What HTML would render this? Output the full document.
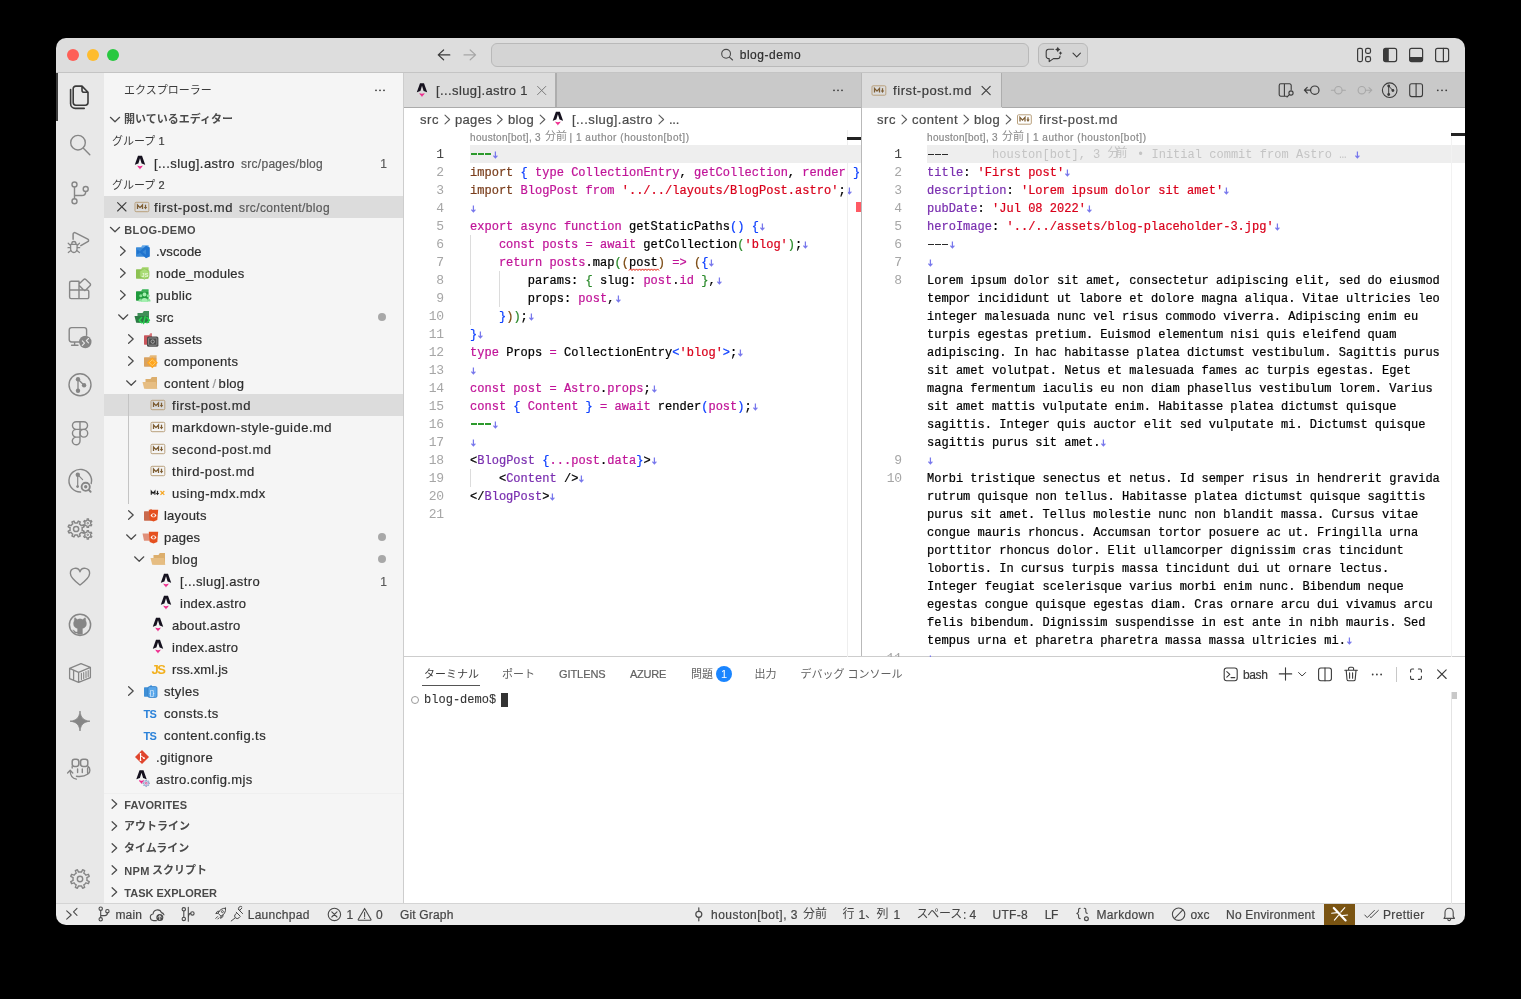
<!DOCTYPE html>
<html><head><meta charset="utf-8"><title>blog-demo</title>
<style>
html,body{margin:0;padding:0}
body{background:#000;width:1521px;height:999px;overflow:hidden;position:relative;font-family:"Liberation Sans",sans-serif;-webkit-font-smoothing:antialiased}
#win{will-change:transform;position:absolute;left:0;top:0;width:1521px;height:999px;clip-path:inset(38px 56px 74px 56px round 10px);background:#fff}
.m{font-family:"Liberation Mono",monospace}
svg{overflow:visible}
.jpt{position:absolute;white-space:pre;font-family:"Liberation Sans","Noto Sans CJK JP",sans-serif}
.code{position:absolute;font-family:"Liberation Mono",monospace;font-size:12px;line-height:18px;letter-spacing:0.022px;white-space:pre;color:#000}
.code i{font-style:normal}
.code{-webkit-text-stroke:0.22px}
svg.a{vertical-align:top;display:inline-block}
.ln{position:absolute;font-family:"Liberation Mono",monospace;font-size:13px;letter-spacing:-0.4px;line-height:18px;text-align:right;color:#a3a3a3;white-space:pre}
.e{color:#5f7cff;font-size:9px;position:relative;top:0px}
</style></head><body><div id="win">
<div style="position:absolute;left:56px;top:38px;width:1409px;height:35px;background:#dddddd;"></div>
<div style="position:absolute;left:56px;top:72px;width:1409px;height:1px;background:#c4c4c4;"></div>
<div style="position:absolute;left:56px;top:73px;width:48px;height:831px;background:#e8e8e8;"></div>
<div style="position:absolute;left:104px;top:73px;width:299px;height:831px;background:#f5f5f5;"></div>
<div style="position:absolute;left:403px;top:73px;width:1px;height:831px;background:#cdcdcd;"></div>
<div style="position:absolute;left:404px;top:73px;width:1061px;height:35px;background:#c9c9c9;"></div>
<div style="position:absolute;left:404px;top:107px;width:1061px;height:1px;background:#ababab;"></div>
<div style="position:absolute;left:404px;top:108px;width:1061px;height:549px;background:#fff;"></div>
<div style="position:absolute;left:861px;top:73px;width:1px;height:584px;background:#b9b9b9;"></div>
<div style="position:absolute;left:404px;top:656px;width:1061px;height:1px;background:#cdcdcd;"></div>
<div style="position:absolute;left:404px;top:657px;width:1061px;height:246px;background:#fff;"></div>
<div style="position:absolute;left:56px;top:903px;width:1409px;height:22px;background:#ececec;"></div>
<div style="position:absolute;left:56px;top:903px;width:1409px;height:1px;background:#d4d4d4;"></div>
<div style="position:absolute;left:67px;top:49px;width:12px;height:12px;border-radius:50%;background:#fe5f57"></div>
<div style="position:absolute;left:87px;top:49px;width:12px;height:12px;border-radius:50%;background:#febc2e"></div>
<div style="position:absolute;left:107px;top:49px;width:12px;height:12px;border-radius:50%;background:#28c840"></div>
<div style="position:absolute;left:491px;top:43px;width:536px;height:21.7px;border:1px solid #b9b9b9;border-radius:6px;background:#d4d4d4;box-sizing:content-box"></div>
<div style="position:absolute;top:44.4px;height:22px;line-height:22px;font-size:12px;color:#2e2e2e;white-space:pre;left:739.7px;letter-spacing:0.533px;-webkit-text-stroke:0.2px;">blog-demo</div>
<div style="position:absolute;left:1038px;top:43px;width:48px;height:21.7px;border:1px solid #b9b9b9;border-radius:6px;background:#d4d4d4"></div>
<div class="jpt" style="left:124px;top:84.5px;font-size:11px;line-height:11px;height:11px;color:#3b3b3b">エクスプローラー</div>
<div class="jpt" style="left:124px;top:113.5px;font-size:11px;line-height:11px;height:11px;color:#4a4a4a;font-weight:bold">開いているエディター</div>
<div class="jpt" style="left:112px;top:135.5px;font-size:11px;line-height:11px;height:11px;color:#3b3b3b">グループ</div>
<div style="position:absolute;top:130px;height:22px;line-height:22px;font-size:11px;color:#3b3b3b;white-space:pre;left:158.5px;-webkit-text-stroke:0.2px;">1</div>
<div class="jpt" style="left:112px;top:179.5px;font-size:11px;line-height:11px;height:11px;color:#3b3b3b">グループ</div>
<div style="position:absolute;top:174px;height:22px;line-height:22px;font-size:11px;color:#3b3b3b;white-space:pre;left:158.5px;-webkit-text-stroke:0.2px;">2</div>
<div style="position:absolute;left:104px;top:196px;width:299px;height:22px;background:#dcdcdc;"></div>
<div style="position:absolute;top:153px;height:22px;line-height:22px;font-size:13px;color:#2e2e2e;white-space:pre;left:154px;letter-spacing:0.439px;-webkit-text-stroke:0.2px;">[...slug].astro</div>
<div style="position:absolute;top:153px;height:22px;line-height:22px;font-size:12px;color:#5a5a5a;white-space:pre;left:241px;letter-spacing:0.282px;-webkit-text-stroke:0.2px;">src/pages/blog</div>
<div style="position:absolute;top:153px;height:22px;line-height:22px;font-size:12px;color:#5a5a5a;white-space:pre;right:1134px;-webkit-text-stroke:0.2px;">1</div>
<div style="position:absolute;top:197px;height:22px;line-height:22px;font-size:13px;color:#2e2e2e;white-space:pre;left:154px;letter-spacing:0.576px;-webkit-text-stroke:0.2px;">first-post.md</div>
<div style="position:absolute;top:197px;height:22px;line-height:22px;font-size:12px;color:#5a5a5a;white-space:pre;left:239px;letter-spacing:0.393px;-webkit-text-stroke:0.2px;">src/content/blog</div>
<div style="position:absolute;top:218.5px;height:22px;line-height:22px;font-size:11px;color:#4a4a4a;white-space:pre;left:124.3px;font-weight:bold;letter-spacing:0.340px;">BLOG-DEMO</div>
<div style="position:absolute;left:104px;top:394px;width:299px;height:22px;background:#dcdcdc;"></div>
<div style="position:absolute;top:241px;height:22px;line-height:22px;font-size:13px;color:#2e2e2e;white-space:pre;left:156px;letter-spacing:0.114px;-webkit-text-stroke:0.2px;">.vscode</div>
<div style="position:absolute;top:263px;height:22px;line-height:22px;font-size:13px;color:#2e2e2e;white-space:pre;left:156px;letter-spacing:0.276px;-webkit-text-stroke:0.2px;">node_modules</div>
<div style="position:absolute;top:285px;height:22px;line-height:22px;font-size:13px;color:#2e2e2e;white-space:pre;left:156px;letter-spacing:0.356px;-webkit-text-stroke:0.2px;">public</div>
<div style="position:absolute;top:307px;height:22px;line-height:22px;font-size:13px;color:#2e2e2e;white-space:pre;left:156px;letter-spacing:0.124px;-webkit-text-stroke:0.2px;">src</div>
<div style="position:absolute;top:329px;height:22px;line-height:22px;font-size:13px;color:#2e2e2e;white-space:pre;left:164px;letter-spacing:0.105px;-webkit-text-stroke:0.2px;">assets</div>
<div style="position:absolute;top:351px;height:22px;line-height:22px;font-size:13px;color:#2e2e2e;white-space:pre;left:164px;letter-spacing:0.358px;-webkit-text-stroke:0.2px;">components</div>
<div style="position:absolute;top:395px;height:22px;line-height:22px;font-size:13px;color:#2e2e2e;white-space:pre;left:172px;letter-spacing:0.576px;-webkit-text-stroke:0.2px;">first-post.md</div>
<div style="position:absolute;top:417px;height:22px;line-height:22px;font-size:13px;color:#2e2e2e;white-space:pre;left:172px;letter-spacing:0.486px;-webkit-text-stroke:0.2px;">markdown-style-guide.md</div>
<div style="position:absolute;top:439px;height:22px;line-height:22px;font-size:13px;color:#2e2e2e;white-space:pre;left:172px;letter-spacing:0.501px;-webkit-text-stroke:0.2px;">second-post.md</div>
<div style="position:absolute;top:461px;height:22px;line-height:22px;font-size:13px;color:#2e2e2e;white-space:pre;left:172px;letter-spacing:0.541px;-webkit-text-stroke:0.2px;">third-post.md</div>
<div style="position:absolute;top:483px;height:22px;line-height:22px;font-size:13px;color:#2e2e2e;white-space:pre;left:172px;letter-spacing:0.428px;-webkit-text-stroke:0.2px;">using-mdx.mdx</div>
<div style="position:absolute;top:505px;height:22px;line-height:22px;font-size:13px;color:#2e2e2e;white-space:pre;left:164px;letter-spacing:0.201px;-webkit-text-stroke:0.2px;">layouts</div>
<div style="position:absolute;top:527px;height:22px;line-height:22px;font-size:13px;color:#2e2e2e;white-space:pre;left:164px;letter-spacing:0.156px;-webkit-text-stroke:0.2px;">pages</div>
<div style="position:absolute;top:549px;height:22px;line-height:22px;font-size:13px;color:#2e2e2e;white-space:pre;left:172px;letter-spacing:0.355px;-webkit-text-stroke:0.2px;">blog</div>
<div style="position:absolute;top:571px;height:22px;line-height:22px;font-size:13px;color:#2e2e2e;white-space:pre;left:180px;letter-spacing:0.372px;-webkit-text-stroke:0.2px;">[...slug].astro</div>
<div style="position:absolute;top:593px;height:22px;line-height:22px;font-size:13px;color:#2e2e2e;white-space:pre;left:180px;letter-spacing:0.237px;-webkit-text-stroke:0.2px;">index.astro</div>
<div style="position:absolute;top:615px;height:22px;line-height:22px;font-size:13px;color:#2e2e2e;white-space:pre;left:172px;letter-spacing:0.323px;-webkit-text-stroke:0.2px;">about.astro</div>
<div style="position:absolute;top:637px;height:22px;line-height:22px;font-size:13px;color:#2e2e2e;white-space:pre;left:172px;letter-spacing:0.237px;-webkit-text-stroke:0.2px;">index.astro</div>
<div style="position:absolute;top:659px;height:22px;line-height:22px;font-size:13px;color:#2e2e2e;white-space:pre;left:172px;letter-spacing:0.174px;-webkit-text-stroke:0.2px;">rss.xml.js</div>
<div style="position:absolute;top:681px;height:22px;line-height:22px;font-size:13px;color:#2e2e2e;white-space:pre;left:164px;letter-spacing:0.345px;-webkit-text-stroke:0.2px;">styles</div>
<div style="position:absolute;top:703px;height:22px;line-height:22px;font-size:13px;color:#2e2e2e;white-space:pre;left:164px;letter-spacing:0.356px;-webkit-text-stroke:0.2px;">consts.ts</div>
<div style="position:absolute;top:725px;height:22px;line-height:22px;font-size:13px;color:#2e2e2e;white-space:pre;left:164px;letter-spacing:0.437px;-webkit-text-stroke:0.2px;">content.config.ts</div>
<div style="position:absolute;top:747px;height:22px;line-height:22px;font-size:13px;color:#2e2e2e;white-space:pre;left:156px;letter-spacing:0.352px;-webkit-text-stroke:0.2px;">.gitignore</div>
<div style="position:absolute;top:769px;height:22px;line-height:22px;font-size:13px;color:#2e2e2e;white-space:pre;left:156px;letter-spacing:0.342px;-webkit-text-stroke:0.2px;">astro.config.mjs</div>
<div style="position:absolute;top:373px;height:22px;line-height:22px;font-size:13px;color:#2e2e2e;white-space:pre;left:164px;letter-spacing:0.422px;-webkit-text-stroke:0.2px;">content</div>
<div style="position:absolute;top:373px;height:22px;line-height:22px;font-size:13px;color:#9a9a9a;white-space:pre;left:212.5px;-webkit-text-stroke:0.2px;">/</div>
<div style="position:absolute;top:373px;height:22px;line-height:22px;font-size:13px;color:#2e2e2e;white-space:pre;left:218.6px;letter-spacing:0.305px;-webkit-text-stroke:0.2px;">blog</div>
<div style="position:absolute;top:571px;height:22px;line-height:22px;font-size:12px;color:#5a5a5a;white-space:pre;right:1134px;-webkit-text-stroke:0.2px;">1</div>
<div style="position:absolute;left:378px;top:313px;width:8px;height:8px;border-radius:50%;background:#a8a8a8"></div>
<div style="position:absolute;left:378px;top:533px;width:8px;height:8px;border-radius:50%;background:#a8a8a8"></div>
<div style="position:absolute;left:378px;top:555px;width:8px;height:8px;border-radius:50%;background:#a8a8a8"></div>
<div style="position:absolute;left:128px;top:394px;width:1px;height:110px;background:#c4c4c4;"></div>
<div style="position:absolute;left:104px;top:793px;width:299px;height:1px;background:#efefef;"></div>
<div style="position:absolute;top:793.5px;height:22px;line-height:22px;font-size:11px;color:#4a4a4a;white-space:pre;left:124.3px;font-weight:bold;letter-spacing:0.172px;">FAVORITES</div>
<div class="jpt" style="left:124px;top:820.5px;font-size:11px;line-height:11px;height:11px;color:#4a4a4a;font-weight:bold">アウトライン</div>
<div class="jpt" style="left:124px;top:842.5px;font-size:11px;line-height:11px;height:11px;color:#4a4a4a;font-weight:bold">タイムライン</div>
<div style="position:absolute;top:859.5px;height:22px;line-height:22px;font-size:11px;color:#4a4a4a;white-space:pre;left:124.3px;font-weight:bold;letter-spacing:0.352px;">NPM</div>
<div class="jpt" style="left:152px;top:864.5px;font-size:11px;line-height:11px;height:11px;color:#4a4a4a;font-weight:bold">スクリプト</div>
<div style="position:absolute;top:881.5px;height:22px;line-height:22px;font-size:11px;color:#4a4a4a;white-space:pre;left:124.3px;font-weight:bold;letter-spacing:-0.001px;">TASK EXPLORER</div>
<div style="position:absolute;left:404px;top:73px;width:152px;height:34px;background:#dcdcdc;"></div>
<div style="position:absolute;left:555.3px;top:73px;width:1.6px;height:34px;background:#adadad;"></div>
<div style="position:absolute;top:80px;height:22px;line-height:22px;font-size:13px;color:#3b3b3b;white-space:pre;left:436px;letter-spacing:0.396px;-webkit-text-stroke:0.2px;">[...slug].astro 1</div>
<div style="position:absolute;left:862px;top:73px;width:140px;height:35px;background:#dcdcdc;"></div>
<div style="position:absolute;left:1000.7px;top:73px;width:1.5px;height:34px;background:#adadad;"></div>
<div style="position:absolute;top:80px;height:22px;line-height:22px;font-size:13px;color:#3b3b3b;white-space:pre;left:893px;letter-spacing:0.576px;-webkit-text-stroke:0.2px;">first-post.md</div>
<div style="position:absolute;top:109px;height:22px;line-height:22px;font-size:13px;color:#4a4a4a;white-space:pre;left:420px;letter-spacing:0.557px;-webkit-text-stroke:0.2px;">src</div>
<div style="position:absolute;top:109px;height:22px;line-height:22px;font-size:13px;color:#4a4a4a;white-space:pre;left:455px;letter-spacing:0.316px;-webkit-text-stroke:0.2px;">pages</div>
<div style="position:absolute;top:109px;height:22px;line-height:22px;font-size:13px;color:#4a4a4a;white-space:pre;left:508px;letter-spacing:0.355px;-webkit-text-stroke:0.2px;">blog</div>
<div style="position:absolute;top:109px;height:22px;line-height:22px;font-size:13px;color:#4a4a4a;white-space:pre;left:572px;letter-spacing:0.439px;-webkit-text-stroke:0.2px;">[...slug].astro</div>
<div style="position:absolute;top:109px;height:22px;line-height:22px;font-size:13px;color:#4a4a4a;white-space:pre;left:669px;letter-spacing:-0.278px;-webkit-text-stroke:0.2px;">...</div>
<div style="position:absolute;top:109px;height:22px;line-height:22px;font-size:13px;color:#4a4a4a;white-space:pre;left:877px;letter-spacing:0.557px;-webkit-text-stroke:0.2px;">src</div>
<div style="position:absolute;top:109px;height:22px;line-height:22px;font-size:13px;color:#4a4a4a;white-space:pre;left:912px;letter-spacing:0.479px;-webkit-text-stroke:0.2px;">content</div>
<div style="position:absolute;top:109px;height:22px;line-height:22px;font-size:13px;color:#4a4a4a;white-space:pre;left:974px;letter-spacing:0.355px;-webkit-text-stroke:0.2px;">blog</div>
<div style="position:absolute;top:109px;height:22px;line-height:22px;font-size:13px;color:#4a4a4a;white-space:pre;left:1039px;letter-spacing:0.576px;-webkit-text-stroke:0.2px;">first-post.md</div>
<div style="position:absolute;top:126.5px;height:22px;line-height:22px;font-size:10px;color:#8a8a8a;white-space:pre;left:470px;letter-spacing:0.323px;-webkit-text-stroke:0.2px;">houston[bot], 3</div>
<div class="jpt" style="left:545px;top:130.8px;font-size:11px;line-height:11px;height:11px;color:#8a8a8a">分前</div>
<div style="position:absolute;top:126.5px;height:22px;line-height:22px;font-size:10px;color:#8a8a8a;white-space:pre;left:569.5px;letter-spacing:0.538px;-webkit-text-stroke:0.2px;">| 1 author (houston[bot])</div>
<div style="position:absolute;top:126.5px;height:22px;line-height:22px;font-size:10px;color:#8a8a8a;white-space:pre;left:927px;letter-spacing:0.323px;-webkit-text-stroke:0.2px;">houston[bot], 3</div>
<div class="jpt" style="left:1002px;top:130.8px;font-size:11px;line-height:11px;height:11px;color:#8a8a8a">分前</div>
<div style="position:absolute;top:126.5px;height:22px;line-height:22px;font-size:10px;color:#8a8a8a;white-space:pre;left:1026.5px;letter-spacing:0.538px;-webkit-text-stroke:0.2px;">| 1 author (houston[bot])</div>
<div style="position:absolute;left:404px;top:108px;width:457px;height:549px;overflow:hidden">
<div style="position:absolute;left:66px;top:37px;width:391px;height:18px;background:#eeeeee"></div>
<div class="code" style="left:66px;top:38px"><i style="display:inline-block;width:21.66px;height:18px;vertical-align:top;position:relative"><i style="position:absolute;left:0.50px;top:7.2px;width:6.3px;height:1.9px;background:#2c9a2c"></i><i style="position:absolute;left:7.72px;top:7.2px;width:6.3px;height:1.9px;background:#2c9a2c"></i><i style="position:absolute;left:14.94px;top:7.2px;width:6.3px;height:1.9px;background:#2c9a2c"></i></i><svg class="a" width="7.22" height="18" viewBox="0 0 7.22 18"><path d="M3.4 5.6v6.2M1.4 9.6l2 2.3 2-2.3" fill="none" stroke="#7878ec" stroke-width="1.25"/></svg></div>
<div class="code" style="left:66px;top:56px"><i style="color:#7a3e1d">import</i> <i style="color:#0f41ff">{</i><i style="color:#c01498"> type CollectionEntry</i>, <i style="color:#c01498">getCollection</i>, <i style="color:#c01498">render</i> <i style="color:#0f41ff">}</i><i style="color:#c01498"> from</i> <i style="color:#d9001b">'astro:content'</i>;<svg class="a" width="7.22" height="18" viewBox="0 0 7.22 18"><path d="M3.4 5.6v6.2M1.4 9.6l2 2.3 2-2.3" fill="none" stroke="#7878ec" stroke-width="1.25"/></svg></div>
<div class="code" style="left:66px;top:74px"><i style="color:#7a3e1d">import</i><i style="color:#c01498"> BlogPost from </i><i style="color:#d9001b">'../../layouts/BlogPost.astro'</i>;<svg class="a" width="7.22" height="18" viewBox="0 0 7.22 18"><path d="M3.4 5.6v6.2M1.4 9.6l2 2.3 2-2.3" fill="none" stroke="#7878ec" stroke-width="1.25"/></svg></div>
<div class="code" style="left:66px;top:92px"><svg class="a" width="7.22" height="18" viewBox="0 0 7.22 18"><path d="M3.4 5.6v6.2M1.4 9.6l2 2.3 2-2.3" fill="none" stroke="#7878ec" stroke-width="1.25"/></svg></div>
<div class="code" style="left:66px;top:110px"><i style="color:#c01498">export async function </i>getStaticPaths<i style="color:#0f41ff">()</i> <i style="color:#0f41ff">{</i><svg class="a" width="7.22" height="18" viewBox="0 0 7.22 18"><path d="M3.4 5.6v6.2M1.4 9.6l2 2.3 2-2.3" fill="none" stroke="#7878ec" stroke-width="1.25"/></svg></div>
<div class="code" style="left:66px;top:128px"><i style="color:#c01498">    const posts = await </i>getCollection<i style="color:#2a8a2a">(</i><i style="color:#d9001b">'blog'</i><i style="color:#2a8a2a">)</i>;<svg class="a" width="7.22" height="18" viewBox="0 0 7.22 18"><path d="M3.4 5.6v6.2M1.4 9.6l2 2.3 2-2.3" fill="none" stroke="#7878ec" stroke-width="1.25"/></svg></div>
<div class="code" style="left:66px;top:146px"><i style="color:#c01498">    return posts</i>.map<i style="color:#2a8a2a">(</i><i style="color:#7b4a12">(</i>post<i style="color:#7b4a12">)</i><i style="color:#c01498"> =&gt; </i><i style="color:#7b4a12">(</i><i style="color:#0f41ff">{</i><svg class="a" width="7.22" height="18" viewBox="0 0 7.22 18"><path d="M3.4 5.6v6.2M1.4 9.6l2 2.3 2-2.3" fill="none" stroke="#7878ec" stroke-width="1.25"/></svg></div>
<div class="code" style="left:66px;top:164px">        params: <i style="color:#2a8a2a">{</i> slug: <i style="color:#c01498">post</i>.<i style="color:#c01498">id</i> <i style="color:#2a8a2a">}</i>,<svg class="a" width="7.22" height="18" viewBox="0 0 7.22 18"><path d="M3.4 5.6v6.2M1.4 9.6l2 2.3 2-2.3" fill="none" stroke="#7878ec" stroke-width="1.25"/></svg></div>
<div class="code" style="left:66px;top:182px">        props: <i style="color:#c01498">post</i>,<svg class="a" width="7.22" height="18" viewBox="0 0 7.22 18"><path d="M3.4 5.6v6.2M1.4 9.6l2 2.3 2-2.3" fill="none" stroke="#7878ec" stroke-width="1.25"/></svg></div>
<div class="code" style="left:66px;top:200px">    <i style="color:#0f41ff">}</i><i style="color:#7b4a12">)</i><i style="color:#2a8a2a">)</i>;<svg class="a" width="7.22" height="18" viewBox="0 0 7.22 18"><path d="M3.4 5.6v6.2M1.4 9.6l2 2.3 2-2.3" fill="none" stroke="#7878ec" stroke-width="1.25"/></svg></div>
<div class="code" style="left:66px;top:218px"><i style="color:#0f41ff">}</i><svg class="a" width="7.22" height="18" viewBox="0 0 7.22 18"><path d="M3.4 5.6v6.2M1.4 9.6l2 2.3 2-2.3" fill="none" stroke="#7878ec" stroke-width="1.25"/></svg></div>
<div class="code" style="left:66px;top:236px"><i style="color:#c01498">type</i> Props <i style="color:#c01498">=</i> CollectionEntry<i style="color:#0f41ff">&lt;</i><i style="color:#d9001b">'blog'</i><i style="color:#0f41ff">&gt;</i>;<svg class="a" width="7.22" height="18" viewBox="0 0 7.22 18"><path d="M3.4 5.6v6.2M1.4 9.6l2 2.3 2-2.3" fill="none" stroke="#7878ec" stroke-width="1.25"/></svg></div>
<div class="code" style="left:66px;top:254px"><svg class="a" width="7.22" height="18" viewBox="0 0 7.22 18"><path d="M3.4 5.6v6.2M1.4 9.6l2 2.3 2-2.3" fill="none" stroke="#7878ec" stroke-width="1.25"/></svg></div>
<div class="code" style="left:66px;top:272px"><i style="color:#c01498">const post = Astro</i>.<i style="color:#c01498">props</i>;<svg class="a" width="7.22" height="18" viewBox="0 0 7.22 18"><path d="M3.4 5.6v6.2M1.4 9.6l2 2.3 2-2.3" fill="none" stroke="#7878ec" stroke-width="1.25"/></svg></div>
<div class="code" style="left:66px;top:290px"><i style="color:#c01498">const </i><i style="color:#0f41ff">{</i><i style="color:#c01498"> Content </i><i style="color:#0f41ff">}</i><i style="color:#c01498"> = await </i>render<i style="color:#0f41ff">(</i><i style="color:#c01498">post</i><i style="color:#0f41ff">)</i>;<svg class="a" width="7.22" height="18" viewBox="0 0 7.22 18"><path d="M3.4 5.6v6.2M1.4 9.6l2 2.3 2-2.3" fill="none" stroke="#7878ec" stroke-width="1.25"/></svg></div>
<div class="code" style="left:66px;top:308px"><i style="display:inline-block;width:21.66px;height:18px;vertical-align:top;position:relative"><i style="position:absolute;left:0.50px;top:7.2px;width:6.3px;height:1.9px;background:#2c9a2c"></i><i style="position:absolute;left:7.72px;top:7.2px;width:6.3px;height:1.9px;background:#2c9a2c"></i><i style="position:absolute;left:14.94px;top:7.2px;width:6.3px;height:1.9px;background:#2c9a2c"></i></i><svg class="a" width="7.22" height="18" viewBox="0 0 7.22 18"><path d="M3.4 5.6v6.2M1.4 9.6l2 2.3 2-2.3" fill="none" stroke="#7878ec" stroke-width="1.25"/></svg></div>
<div class="code" style="left:66px;top:326px"><svg class="a" width="7.22" height="18" viewBox="0 0 7.22 18"><path d="M3.4 5.6v6.2M1.4 9.6l2 2.3 2-2.3" fill="none" stroke="#7878ec" stroke-width="1.25"/></svg></div>
<div class="code" style="left:66px;top:344px">&lt;<i style="color:#7a2fb0">BlogPost</i> <i style="color:#0f41ff">{</i><i style="color:#c01498">...post</i>.<i style="color:#c01498">data</i><i style="color:#0f41ff">}</i>&gt;<svg class="a" width="7.22" height="18" viewBox="0 0 7.22 18"><path d="M3.4 5.6v6.2M1.4 9.6l2 2.3 2-2.3" fill="none" stroke="#7878ec" stroke-width="1.25"/></svg></div>
<div class="code" style="left:66px;top:362px">    &lt;<i style="color:#7a2fb0">Content</i> /&gt;<svg class="a" width="7.22" height="18" viewBox="0 0 7.22 18"><path d="M3.4 5.6v6.2M1.4 9.6l2 2.3 2-2.3" fill="none" stroke="#7878ec" stroke-width="1.25"/></svg></div>
<div class="code" style="left:66px;top:380px">&lt;/<i style="color:#7a2fb0">BlogPost</i>&gt;<svg class="a" width="7.22" height="18" viewBox="0 0 7.22 18"><path d="M3.4 5.6v6.2M1.4 9.6l2 2.3 2-2.3" fill="none" stroke="#7878ec" stroke-width="1.25"/></svg></div>
</div>
<div class="ln" style="left:404px;width:39.6px;top:145.5px;color:#454545">1</div>
<div class="ln" style="left:404px;width:39.6px;top:163.5px;color:#a6a6a6">2</div>
<div class="ln" style="left:404px;width:39.6px;top:181.5px;color:#a6a6a6">3</div>
<div class="ln" style="left:404px;width:39.6px;top:199.5px;color:#a6a6a6">4</div>
<div class="ln" style="left:404px;width:39.6px;top:217.5px;color:#a6a6a6">5</div>
<div class="ln" style="left:404px;width:39.6px;top:235.5px;color:#a6a6a6">6</div>
<div class="ln" style="left:404px;width:39.6px;top:253.5px;color:#a6a6a6">7</div>
<div class="ln" style="left:404px;width:39.6px;top:271.5px;color:#a6a6a6">8</div>
<div class="ln" style="left:404px;width:39.6px;top:289.5px;color:#a6a6a6">9</div>
<div class="ln" style="left:404px;width:39.6px;top:307.5px;color:#a6a6a6">10</div>
<div class="ln" style="left:404px;width:39.6px;top:325.5px;color:#a6a6a6">11</div>
<div class="ln" style="left:404px;width:39.6px;top:343.5px;color:#a6a6a6">12</div>
<div class="ln" style="left:404px;width:39.6px;top:361.5px;color:#a6a6a6">13</div>
<div class="ln" style="left:404px;width:39.6px;top:379.5px;color:#a6a6a6">14</div>
<div class="ln" style="left:404px;width:39.6px;top:397.5px;color:#a6a6a6">15</div>
<div class="ln" style="left:404px;width:39.6px;top:415.5px;color:#a6a6a6">16</div>
<div class="ln" style="left:404px;width:39.6px;top:433.5px;color:#a6a6a6">17</div>
<div class="ln" style="left:404px;width:39.6px;top:451.5px;color:#a6a6a6">18</div>
<div class="ln" style="left:404px;width:39.6px;top:469.5px;color:#a6a6a6">19</div>
<div class="ln" style="left:404px;width:39.6px;top:487.5px;color:#a6a6a6">20</div>
<div class="ln" style="left:404px;width:39.6px;top:505.5px;color:#a6a6a6">21</div>
<div style="position:absolute;left:470px;top:235px;width:1px;height:90px;background:#dcdcdc;"></div>
<div style="position:absolute;left:499px;top:271px;width:1px;height:36px;background:#dcdcdc;"></div>
<div style="position:absolute;left:470px;top:469px;width:1px;height:18px;background:#dcdcdc;"></div>
<svg style="position:absolute;left:0;top:0" width="1521" height="999" viewBox="0 0 1521 999"><path d="M629 270.5l1.5 -1.6l1.5 1.6l1.5 -1.6l1.5 1.6l1.5 -1.6l1.5 1.6l1.5 -1.6l1.5 1.6l1.5 -1.6l1.5 1.6l1.5 -1.6l1.5 1.6l1.5 -1.6l1.5 1.6l1.5 -1.6l1.5 1.6l1.5 -1.6l1.5 1.6l1.5 -1.6l1.5 1.6" fill="none" stroke="#e51400" stroke-width="1"/></svg>
<div style="position:absolute;left:847px;top:130px;width:1px;height:527px;background:#eeeeee;"></div>
<div style="position:absolute;left:847px;top:137.2px;width:14px;height:2.5px;background:#222;"></div>
<div style="position:absolute;left:856px;top:202px;width:5px;height:10px;background:#ff5a64;"></div>
<div style="position:absolute;left:862px;top:108px;width:603px;height:549px;overflow:hidden">
<div style="position:absolute;left:65px;top:37px;width:538px;height:18px;background:#eeeeee"></div>
<div class="code" style="left:65px;top:38px"><i style="display:inline-block;width:21.66px;height:18px;vertical-align:top;position:relative"><i style="position:absolute;left:0.50px;top:7.6px;width:6.3px;height:1.4px;background:#2a2a2a"></i><i style="position:absolute;left:7.72px;top:7.6px;width:6.3px;height:1.4px;background:#2a2a2a"></i><i style="position:absolute;left:14.94px;top:7.6px;width:6.3px;height:1.4px;background:#2a2a2a"></i></i></div>
<div class="ln" style="left:0px;width:39.6px;top:37.5px;color:#454545">1</div>
<div class="code" style="left:65px;top:56px"><i style="color:#7a2fb0">title</i>: <i style="color:#d9001b">'First post'</i><svg class="a" width="7.22" height="18" viewBox="0 0 7.22 18"><path d="M3.4 5.6v6.2M1.4 9.6l2 2.3 2-2.3" fill="none" stroke="#7878ec" stroke-width="1.25"/></svg></div>
<div class="ln" style="left:0px;width:39.6px;top:55.5px;color:#a6a6a6">2</div>
<div class="code" style="left:65px;top:74px"><i style="color:#7a2fb0">description</i>: <i style="color:#d9001b">'Lorem ipsum dolor sit amet'</i><svg class="a" width="7.22" height="18" viewBox="0 0 7.22 18"><path d="M3.4 5.6v6.2M1.4 9.6l2 2.3 2-2.3" fill="none" stroke="#7878ec" stroke-width="1.25"/></svg></div>
<div class="ln" style="left:0px;width:39.6px;top:73.5px;color:#a6a6a6">3</div>
<div class="code" style="left:65px;top:92px"><i style="color:#7a2fb0">pubDate</i>: <i style="color:#d9001b">'Jul 08 2022'</i><svg class="a" width="7.22" height="18" viewBox="0 0 7.22 18"><path d="M3.4 5.6v6.2M1.4 9.6l2 2.3 2-2.3" fill="none" stroke="#7878ec" stroke-width="1.25"/></svg></div>
<div class="ln" style="left:0px;width:39.6px;top:91.5px;color:#a6a6a6">4</div>
<div class="code" style="left:65px;top:110px"><i style="color:#7a2fb0">heroImage</i>: <i style="color:#d9001b">'../../assets/blog-placeholder-3.jpg'</i><svg class="a" width="7.22" height="18" viewBox="0 0 7.22 18"><path d="M3.4 5.6v6.2M1.4 9.6l2 2.3 2-2.3" fill="none" stroke="#7878ec" stroke-width="1.25"/></svg></div>
<div class="ln" style="left:0px;width:39.6px;top:109.5px;color:#a6a6a6">5</div>
<div class="code" style="left:65px;top:128px"><i style="display:inline-block;width:21.66px;height:18px;vertical-align:top;position:relative"><i style="position:absolute;left:0.50px;top:7.6px;width:6.3px;height:1.4px;background:#2a2a2a"></i><i style="position:absolute;left:7.72px;top:7.6px;width:6.3px;height:1.4px;background:#2a2a2a"></i><i style="position:absolute;left:14.94px;top:7.6px;width:6.3px;height:1.4px;background:#2a2a2a"></i></i><svg class="a" width="7.22" height="18" viewBox="0 0 7.22 18"><path d="M3.4 5.6v6.2M1.4 9.6l2 2.3 2-2.3" fill="none" stroke="#7878ec" stroke-width="1.25"/></svg></div>
<div class="ln" style="left:0px;width:39.6px;top:127.5px;color:#a6a6a6">6</div>
<div class="code" style="left:65px;top:146px"><svg class="a" width="7.22" height="18" viewBox="0 0 7.22 18"><path d="M3.4 5.6v6.2M1.4 9.6l2 2.3 2-2.3" fill="none" stroke="#7878ec" stroke-width="1.25"/></svg></div>
<div class="ln" style="left:0px;width:39.6px;top:145.5px;color:#a6a6a6">7</div>
<div class="code" style="left:65px;top:164px">Lorem ipsum dolor sit amet, consectetur adipiscing elit, sed do eiusmod</div>
<div class="ln" style="left:0px;width:39.6px;top:163.5px;color:#a6a6a6">8</div>
<div class="code" style="left:65px;top:182px">tempor incididunt ut labore et dolore magna aliqua. Vitae ultricies leo</div>
<div class="code" style="left:65px;top:200px">integer malesuada nunc vel risus commodo viverra. Adipiscing enim eu</div>
<div class="code" style="left:65px;top:218px">turpis egestas pretium. Euismod elementum nisi quis eleifend quam</div>
<div class="code" style="left:65px;top:236px">adipiscing. In hac habitasse platea dictumst vestibulum. Sagittis purus</div>
<div class="code" style="left:65px;top:254px">sit amet volutpat. Netus et malesuada fames ac turpis egestas. Eget</div>
<div class="code" style="left:65px;top:272px">magna fermentum iaculis eu non diam phasellus vestibulum lorem. Varius</div>
<div class="code" style="left:65px;top:290px">sit amet mattis vulputate enim. Habitasse platea dictumst quisque</div>
<div class="code" style="left:65px;top:308px">sagittis. Integer quis auctor elit sed vulputate mi. Dictumst quisque</div>
<div class="code" style="left:65px;top:326px">sagittis purus sit amet.<svg class="a" width="7.22" height="18" viewBox="0 0 7.22 18"><path d="M3.4 5.6v6.2M1.4 9.6l2 2.3 2-2.3" fill="none" stroke="#7878ec" stroke-width="1.25"/></svg></div>
<div class="code" style="left:65px;top:344px"><svg class="a" width="7.22" height="18" viewBox="0 0 7.22 18"><path d="M3.4 5.6v6.2M1.4 9.6l2 2.3 2-2.3" fill="none" stroke="#7878ec" stroke-width="1.25"/></svg></div>
<div class="ln" style="left:0px;width:39.6px;top:343.5px;color:#a6a6a6">9</div>
<div class="code" style="left:65px;top:362px">Morbi tristique senectus et netus. Id semper risus in hendrerit gravida</div>
<div class="ln" style="left:0px;width:39.6px;top:361.5px;color:#a6a6a6">10</div>
<div class="code" style="left:65px;top:380px">rutrum quisque non tellus. Habitasse platea dictumst quisque sagittis</div>
<div class="code" style="left:65px;top:398px">purus sit amet. Tellus molestie nunc non blandit massa. Cursus vitae</div>
<div class="code" style="left:65px;top:416px">congue mauris rhoncus. Accumsan tortor posuere ac ut. Fringilla urna</div>
<div class="code" style="left:65px;top:434px">porttitor rhoncus dolor. Elit ullamcorper dignissim cras tincidunt</div>
<div class="code" style="left:65px;top:452px">lobortis. In cursus turpis massa tincidunt dui ut ornare lectus.</div>
<div class="code" style="left:65px;top:470px">Integer feugiat scelerisque varius morbi enim nunc. Bibendum neque</div>
<div class="code" style="left:65px;top:488px">egestas congue quisque egestas diam. Cras ornare arcu dui vivamus arcu</div>
<div class="code" style="left:65px;top:506px">felis bibendum. Dignissim suspendisse in est ante in nibh mauris. Sed</div>
<div class="code" style="left:65px;top:524px">tempus urna et pharetra pharetra massa massa ultricies mi.<svg class="a" width="7.22" height="18" viewBox="0 0 7.22 18"><path d="M3.4 5.6v6.2M1.4 9.6l2 2.3 2-2.3" fill="none" stroke="#7878ec" stroke-width="1.25"/></svg></div>
<div class="code" style="left:65px;top:542px"><svg class="a" width="7.22" height="18" viewBox="0 0 7.22 18"><path d="M3.4 5.6v6.2M1.4 9.6l2 2.3 2-2.3" fill="none" stroke="#7878ec" stroke-width="1.25"/></svg></div>
<div class="ln" style="left:0px;width:39.6px;top:541.5px;color:#a6a6a6">11</div>
</div>
<div class="code" style="left:992px;top:146px;color:#c4c4c4;-webkit-text-stroke:0">houston[bot], 3 </div>
<div style="position:absolute;left:1107.5px;top:147.8px;font-size:12px;line-height:12px;height:12px;white-space:pre;color:#c4c4c4;letter-spacing:-4px;font-family:'Liberation Mono','Noto Sans CJK JP',monospace">分前</div>
<div class="code" style="left:1137px;top:146px;color:#c4c4c4;-webkit-text-stroke:0">• Initial commit from Astro … <svg class="a" width="7.22" height="18" viewBox="0 0 7.22 18"><path d="M3.4 5.6v6.2M1.4 9.6l2 2.3 2-2.3" fill="none" stroke="#7878ec" stroke-width="1.25"/></svg></div>
<div style="position:absolute;left:1451px;top:130px;width:1px;height:527px;background:#f2f2f2;"></div>
<div style="position:absolute;left:1451px;top:133.4px;width:14px;height:2.3px;background:#222;"></div>
<div class="jpt" style="left:424px;top:668.5px;font-size:11px;line-height:11px;height:11px;color:#3b3b3b">ターミナル</div>
<div style="position:absolute;left:422px;top:685px;width:58px;height:1.3px;background:#555;"></div>
<div class="jpt" style="left:502px;top:668.5px;font-size:11px;line-height:11px;height:11px;color:#616161">ポート</div>
<div style="position:absolute;top:663.3px;height:22px;line-height:22px;font-size:11px;color:#616161;white-space:pre;left:559px;letter-spacing:-0.081px;-webkit-text-stroke:0.2px;">GITLENS</div>
<div style="position:absolute;top:663.3px;height:22px;line-height:22px;font-size:11px;color:#616161;white-space:pre;left:630px;letter-spacing:-0.256px;-webkit-text-stroke:0.2px;">AZURE</div>
<div class="jpt" style="left:691px;top:668.5px;font-size:11px;line-height:11px;height:11px;color:#616161">問題</div>
<div style="position:absolute;left:716px;top:666px;width:16px;height:16px;border-radius:50%;background:#1a85ff;color:#fff;font-size:11px;line-height:16px;text-align:center">1</div>
<div class="jpt" style="left:754.5px;top:668.5px;font-size:11px;line-height:11px;height:11px;color:#616161">出力</div>
<div class="jpt" style="left:800.5px;top:668.5px;font-size:11px;line-height:11px;height:11px;color:#616161">デバッグ コンソール</div>
<div style="position:absolute;left:411px;top:696px;width:6px;height:6px;border:1px solid #9a9a9a;border-radius:50%;box-sizing:content-box"></div>
<div class="code" style="left:424px;top:691px;color:#333;-webkit-text-stroke:0.1px">blog-demo$ </div>
<div style="position:absolute;left:501px;top:693px;width:7px;height:14px;background:#333;"></div>
<div style="position:absolute;left:1451px;top:692px;width:1px;height:212px;background:#e4e4e4;"></div>
<div style="position:absolute;left:1452px;top:692px;width:5px;height:7px;background:#c8c8c8;"></div>
<div style="position:absolute;top:664px;height:22px;line-height:22px;font-size:12px;color:#3b3b3b;white-space:pre;left:1243px;letter-spacing:-0.380px;-webkit-text-stroke:0.2px;">bash</div>
<div style="position:absolute;left:1396px;top:667px;width:1px;height:15px;background:#c8c8c8;"></div>
<div style="position:absolute;top:905px;height:20px;line-height:20px;font-size:12px;color:#454545;white-space:pre;left:115.5px;letter-spacing:0.123px;-webkit-text-stroke:0.2px;">main</div>
<div style="position:absolute;top:905px;height:20px;line-height:20px;font-size:12px;color:#454545;white-space:pre;left:247.7px;letter-spacing:0.290px;-webkit-text-stroke:0.2px;">Launchpad</div>
<div style="position:absolute;top:905px;height:20px;line-height:20px;font-size:12px;color:#454545;white-space:pre;left:346.5px;letter-spacing:-1.174px;-webkit-text-stroke:0.2px;">1</div>
<div style="position:absolute;top:905px;height:20px;line-height:20px;font-size:12px;color:#454545;white-space:pre;left:376px;letter-spacing:0.326px;-webkit-text-stroke:0.2px;">0</div>
<div style="position:absolute;top:905px;height:20px;line-height:20px;font-size:12px;color:#454545;white-space:pre;left:400px;letter-spacing:0.164px;-webkit-text-stroke:0.2px;">Git Graph</div>
<div style="position:absolute;top:905px;height:20px;line-height:20px;font-size:12px;color:#454545;white-space:pre;left:711px;letter-spacing:0.507px;-webkit-text-stroke:0.2px;">houston[bot], 3</div>
<div class="jpt" style="left:803px;top:908px;font-size:12px;line-height:12px;height:12px;color:#454545">分前</div>
<div class="jpt" style="left:842.5px;top:908px;font-size:12px;line-height:12px;height:12px;color:#454545">行</div>
<div style="position:absolute;top:905px;height:20px;line-height:20px;font-size:12px;color:#454545;white-space:pre;left:858.5px;letter-spacing:-1.174px;-webkit-text-stroke:0.2px;">1</div>
<div class="jpt" style="left:865px;top:908px;font-size:12px;line-height:12px;height:12px;color:#454545">、</div>
<div class="jpt" style="left:876.5px;top:908px;font-size:12px;line-height:12px;height:12px;color:#454545">列</div>
<div style="position:absolute;top:905px;height:20px;line-height:20px;font-size:12px;color:#454545;white-space:pre;left:893.5px;letter-spacing:-1.174px;-webkit-text-stroke:0.2px;">1</div>
<div class="jpt" style="left:916.5px;top:908px;font-size:12px;line-height:12px;height:12px;color:#454545;letter-spacing:-0.3px">スペース</div>
<div style="position:absolute;top:905px;height:20px;line-height:20px;font-size:12px;color:#454545;white-space:pre;left:963px;letter-spacing:-0.114px;-webkit-text-stroke:0.2px;">: 4</div>
<div style="position:absolute;top:905px;height:20px;line-height:20px;font-size:12px;color:#454545;white-space:pre;left:992.5px;letter-spacing:0.301px;-webkit-text-stroke:0.2px;">UTF-8</div>
<div style="position:absolute;top:905px;height:20px;line-height:20px;font-size:12px;color:#454545;white-space:pre;left:1044.8px;letter-spacing:-0.402px;-webkit-text-stroke:0.2px;">LF</div>
<div style="position:absolute;top:905px;height:20px;line-height:20px;font-size:12px;color:#454545;white-space:pre;left:1096.5px;letter-spacing:0.331px;-webkit-text-stroke:0.2px;">Markdown</div>
<div style="position:absolute;top:905px;height:20px;line-height:20px;font-size:12px;color:#454545;white-space:pre;left:1190.5px;letter-spacing:0.109px;-webkit-text-stroke:0.2px;">oxc</div>
<div style="position:absolute;top:905px;height:20px;line-height:20px;font-size:12px;color:#454545;white-space:pre;left:1226px;letter-spacing:0.211px;-webkit-text-stroke:0.2px;">No Environment</div>
<div style="position:absolute;top:905px;height:20px;line-height:20px;font-size:12px;color:#454545;white-space:pre;left:1383px;letter-spacing:0.353px;-webkit-text-stroke:0.2px;">Prettier</div>
<div style="position:absolute;left:1324px;top:904px;width:31px;height:21px;background:#7a5412;"></div>
<div style="position:absolute;left:56px;top:73px;width:2px;height:48px;background:#3b3b3b;"></div>
<svg style="position:absolute;left:0;top:0;" width="1521" height="999" viewBox="0 0 1521 999"><path d="M75.8 86.1H82L88 92.2V102.6a2.6 2.6 0 0 1-2.6 2.6H75.8a2.6 2.6 0 0 1-2.6-2.6V88.7a2.6 2.6 0 0 1 2.6-2.6ZM82 86.3V90.2a2 2 0 0 0 2 2H87.8" fill="none" stroke="#3b3b3b" stroke-width="1.6" stroke-linecap="round" stroke-linejoin="round" /><path d="M70.6 89.5V103.8a4.6 4.6 0 0 0 4.6 4.6H84.2" fill="none" stroke="#3b3b3b" stroke-width="1.6" stroke-linecap="round" stroke-linejoin="round" /><circle cx="78" cy="142.7" r="7.3" fill="none" stroke="#868686" stroke-width="1.4"/><path d="M83.4 148.3L89.8 154.8" fill="none" stroke="#868686" stroke-width="1.4" stroke-linecap="round" stroke-linejoin="round" /><circle cx="74.5" cy="184.5" r="2.5" fill="none" stroke="#868686" stroke-width="1.4"/><circle cx="85.7" cy="189" r="2.5" fill="none" stroke="#868686" stroke-width="1.4"/><circle cx="74.5" cy="201.3" r="2.5" fill="none" stroke="#868686" stroke-width="1.4"/><path d="M74.5 187.2V198.6M85.7 191.7q0 3.8-4 3.8H74.5" fill="none" stroke="#868686" stroke-width="1.4" stroke-linecap="round" stroke-linejoin="round" /><path d="M73.1 239.2V234.2a1.6 1.6 0 0 1 2.4-1.4L87.8 239.1a1.5 1.5 0 0 1 0 2.6L80.8 245.7" fill="none" stroke="#868686" stroke-width="1.5" stroke-linecap="round" stroke-linejoin="round" /><path d="M70.6 244.4H77.1V248.6a3.25 3.9 0 0 1-6.5 0ZM71.7 244.2a2.15 2.7 0 0 1 4.3 0" fill="none" stroke="#868686" stroke-width="1.3" stroke-linecap="round" stroke-linejoin="round" /><path d="M70.3 245.2L68.2 243.2M70.4 247.7H68M70.9 250.6L68.3 252.6M77.4 245.2L79.5 243.2M77.300 247.7H79.7M76.8 250.6L79.4 252.6" fill="none" stroke="#868686" stroke-width="1.2" stroke-linecap="round" stroke-linejoin="round" /><path d="M71.2 281.2H79V290H87.2a1.6 1.6 0 0 1 1.6 1.6V297a1.6 1.6 0 0 1-1.6 1.6H71.2a1.6 1.6 0 0 1-1.6-1.6V282.8a1.6 1.6 0 0 1 1.6-1.6ZM69.8 290H79V298.4M83.7 279.4a1.5 1.5 0 0 1 2.1 0L90 283.6a1.5 1.5 0 0 1 0 2.1L85.8 289.9a1.5 1.5 0 0 1-2.1 0L79.5 285.7a1.5 1.5 0 0 1 0-2.1Z" fill="none" stroke="#868686" stroke-width="1.4" stroke-linecap="round" stroke-linejoin="round" /><path d="M79.5 342H71.6a2.4 2.4 0 0 1-2.4-2.4V330a2.4 2.4 0 0 1 2.4-2.4H84.2a2.4 2.4 0 0 1 2.4 2.4V335.2M74.6 342.4V345M71.6 345.3H78" fill="none" stroke="#868686" stroke-width="1.4" stroke-linecap="round" stroke-linejoin="round" /><circle cx="85.3" cy="342" r="6.2" fill="#868686" stroke="none" stroke-width="0"/><path d="M82.3 340.9L84.5 343.1 82.3 345.3M88.5 338.5L86.3 340.7 88.5 342.9" fill="none" stroke="#e8e8e8" stroke-width="1.1" stroke-linecap="round" stroke-linejoin="round" /><circle cx="80" cy="384.8" r="11" fill="none" stroke="#868686" stroke-width="1.4"/><circle cx="78" cy="379.2" r="2.2" fill="#868686" stroke="none" stroke-width="0"/><circle cx="84.1" cy="385.2" r="2.2" fill="#868686" stroke="none" stroke-width="0"/><circle cx="78" cy="390.8" r="2.2" fill="#868686" stroke="none" stroke-width="0"/><path d="M78 379.2V390.8M78 379.2L84.1 385.2" fill="none" stroke="#868686" stroke-width="1.3" stroke-linecap="round" stroke-linejoin="round" /><path d="M80 421.7H76.3a3.85 3.85 0 0 0 0 7.7H80ZM80 421.7H83.7a3.85 3.85 0 0 1 0 7.7H80M80 429.4H76.3a3.85 3.85 0 0 0 0 7.7H80ZM80 437.1H76.3a3.85 3.85 0 1 0 3.7 3.85Z" fill="none" stroke="#868686" stroke-width="1.4" stroke-linecap="round" stroke-linejoin="round" /><circle cx="83.85" cy="433.25" r="3.85" fill="none" stroke="#868686" stroke-width="1.4"/><path d="M91.2 483.5A11.3 11.3 0 1 0 80.6 492" fill="none" stroke="#868686" stroke-width="1.4" stroke-linecap="round" stroke-linejoin="round" /><circle cx="77.8" cy="474.7" r="2.2" fill="#868686" stroke="none" stroke-width="0"/><circle cx="77.6" cy="486.6" r="1.4" fill="#868686" stroke="none" stroke-width="0"/><path d="M77.7 474.7V486.6M77.8 474.7L82.6 479.6" fill="none" stroke="#868686" stroke-width="1.2" stroke-linecap="round" stroke-linejoin="round" /><circle cx="85.7" cy="486.8" r="4.1" fill="none" stroke="#868686" stroke-width="1.9"/><circle cx="85.7" cy="486.8" r="1.7" fill="#868686" stroke="none" stroke-width="0"/><path d="M88.8 489.9L90.6 491.7" fill="none" stroke="#868686" stroke-width="2" stroke-linecap="round" stroke-linejoin="round" /><path d="M82.19 529.38 L82.07 530.24 L84.01 531.16 L83.22 533.06 L81.20 532.35 L80.68 533.03 L80.13 533.58 L79.45 534.10 L80.16 536.12 L78.26 536.91 L77.34 534.97 L76.48 535.09 L75.72 535.09 L74.86 534.97 L73.94 536.91 L72.04 536.12 L72.75 534.10 L72.07 533.58 L71.52 533.03 L71.00 532.35 L68.98 533.06 L68.19 531.16 L70.13 530.24 L70.01 529.38 L70.01 528.62 L70.13 527.76 L68.19 526.84 L68.98 524.94 L71.00 525.65 L71.52 524.97 L72.07 524.42 L72.75 523.90 L72.04 521.88 L73.94 521.09 L74.86 523.03 L75.72 522.91 L76.48 522.91 L77.34 523.03 L78.26 521.09 L80.16 521.88 L79.45 523.90 L80.13 524.42 L80.68 524.97 L81.20 525.65 L83.22 524.94 L84.01 526.84 L82.07 527.76 L82.19 528.62Z" fill="none" stroke="#868686" stroke-width="1.5" stroke-linecap="round" stroke-linejoin="round" /><circle cx="76.1" cy="529" r="2.6" fill="none" stroke="#868686" stroke-width="1.5"/><path d="M90.69 523.44 L90.59 523.98 L91.83 524.70 L91.11 525.94 L89.87 525.23 L89.46 525.58 L89.03 525.82 L88.52 526.01 L88.52 527.44 L87.08 527.44 L87.08 526.01 L86.57 525.82 L86.14 525.58 L85.73 525.23 L84.49 525.94 L83.77 524.70 L85.01 523.98 L84.91 523.44 L84.91 522.96 L85.01 522.42 L83.77 521.70 L84.49 520.46 L85.73 521.17 L86.14 520.82 L86.57 520.58 L87.08 520.39 L87.08 518.96 L88.52 518.96 L88.52 520.39 L89.03 520.58 L89.46 520.82 L89.87 521.17 L91.11 520.46 L91.83 521.70 L90.59 522.42 L90.69 522.96Z" fill="none" stroke="#868686" stroke-width="1.3" stroke-linecap="round" stroke-linejoin="round" /><circle cx="87.8" cy="523.2" r="0.8" fill="none" stroke="#868686" stroke-width="1.0"/><path d="M90.69 535.04 L90.59 535.58 L91.83 536.30 L91.11 537.54 L89.87 536.83 L89.46 537.18 L89.03 537.42 L88.52 537.61 L88.52 539.04 L87.08 539.04 L87.08 537.61 L86.57 537.42 L86.14 537.18 L85.73 536.83 L84.49 537.54 L83.77 536.30 L85.01 535.58 L84.91 535.04 L84.91 534.56 L85.01 534.02 L83.77 533.30 L84.49 532.06 L85.73 532.77 L86.14 532.42 L86.57 532.18 L87.08 531.99 L87.08 530.56 L88.52 530.56 L88.52 531.99 L89.03 532.18 L89.46 532.42 L89.87 532.77 L91.11 532.06 L91.83 533.30 L90.59 534.02 L90.69 534.56Z" fill="none" stroke="#868686" stroke-width="1.3" stroke-linecap="round" stroke-linejoin="round" /><circle cx="87.8" cy="534.8" r="0.8" fill="none" stroke="#868686" stroke-width="1.0"/><path d="M80 585C76 581.8 70.4 577.6 70.4 573.4a4.9 4.9 0 0 1 9.6-1.6a4.9 4.9 0 0 1 9.6 1.6C89.6 577.6 84 581.8 80 585Z" fill="none" stroke="#868686" stroke-width="1.4" stroke-linecap="round" stroke-linejoin="round" /><circle cx="80" cy="624.8" r="10.6" fill="none" stroke="#868686" stroke-width="1.5"/><path d="M75.2 617.8l2 1.6a7 7 0 0 1 5.6 0l2-1.6a.5.5 0 0 1 .8.4l.2 2.7a5.4 5.4 0 0 1 .7 2.8c0 3-2 4.3-4 4.7v5.8a10 10 0 0 1-5 0v-1.2c-2.2.5-3.2-.4-3.8-1.6-.3-.6-.8-1-1.2-1.4.8-.3 1.6.2 2.2 1 .7.9 1.600 1.200 2.800.7v-3.300c-2-.4-4-1.700-4-4.700a5.400 5.400 0 0 1 .7-2.800l.2-2.700a.5.5 0 0 1 .8-.4Z" fill="#868686" stroke="#868686" stroke-width="0.3" stroke-linecap="round" stroke-linejoin="round" /><path d="M69.6 668.4L81 663.6 90.4 667.4V677.6L78.6 682.4 69.6 678.6ZM69.6 668.4L78.6 672.3 90.4 667.4M78.6 672.3V682.4M73.6 670.4V680.2" fill="none" stroke="#868686" stroke-width="1.3" stroke-linecap="round" stroke-linejoin="round" /><path d="M81.4 673.4V679.4M83.7 672.5V678.5M86 671.5V677.5M88.2 670.600V676.600" fill="none" stroke="#868686" stroke-width="1.1" stroke-linecap="round" stroke-linejoin="round" /><path d="M80 711.400C80.800 717.800 83.400 720.400 90 721.200C83.400 722 80.800 724.600 80 731C79.200 724.600 76.600 722 70 721.200C76.600 720.400 79.200 717.800 80 711.400Z" fill="#868686" stroke="#868686" stroke-width="0.8" stroke-linecap="round" stroke-linejoin="round" /><path d="M74.6 759.2H76.400a2.400 2.400 0 0 1 2.400 2.400V764a2.400 2.400 0 0 1-2.400 2.400H74.600a2.400 2.400 0 0 1-2.400-2.400V761.600a2.400 2.400 0 0 1 2.400-2.400ZM83 759.2H85.400a2.400 2.400 0 0 1 2.400 2.400V764a2.400 2.400 0 0 1-2.400 2.400H83a2.400 2.400 0 0 1-2.400-2.400V761.600a2.400 2.400 0 0 1 2.400-2.400Z" fill="none" stroke="#868686" stroke-width="1.5" stroke-linecap="round" stroke-linejoin="round" /><path d="M72.200 766.400V768M88 766.400C90.500 768 90.500 772.500 88 774C85 776 80 776.800 76.500 776.200M77.600 769V772.600M82.300 769V772.600M87.600 768V773.600" fill="none" stroke="#868686" stroke-width="1.4" stroke-linecap="round" stroke-linejoin="round" /><path d="M76.400 779.200C72.500 778.600 70.200 775.500 70.200 770.600M67.600 773L70.200 770.200 72.800 773" fill="none" stroke="#868686" stroke-width="1.3" stroke-linecap="round" stroke-linejoin="round" /><path d="M86.99 879.44 L86.84 880.47 L89.24 881.61 L88.38 883.69 L85.88 882.80 L85.25 883.63 L84.63 884.25 L83.80 884.88 L84.69 887.38 L82.61 888.24 L81.47 885.84 L80.44 885.99 L79.56 885.99 L78.53 885.84 L77.39 888.24 L75.31 887.38 L76.20 884.88 L75.37 884.25 L74.75 883.63 L74.12 882.80 L71.62 883.69 L70.76 881.61 L73.16 880.47 L73.01 879.44 L73.01 878.56 L73.16 877.53 L70.76 876.39 L71.62 874.31 L74.12 875.20 L74.75 874.37 L75.37 873.75 L76.20 873.12 L75.31 870.62 L77.39 869.76 L78.53 872.16 L79.56 872.01 L80.44 872.01 L81.47 872.16 L82.61 869.76 L84.69 870.62 L83.80 873.12 L84.63 873.75 L85.25 874.37 L85.88 875.20 L88.38 874.31 L89.24 876.39 L86.84 877.53 L86.99 878.56Z" fill="none" stroke="#868686" stroke-width="1.4" stroke-linecap="round" stroke-linejoin="round" /><circle cx="80" cy="879" r="2.7" fill="none" stroke="#868686" stroke-width="1.4"/></svg>
<svg style="position:absolute;left:0;top:0;" width="1521" height="999" viewBox="0 0 1521 999"><path d="M110.4 117.3L115 121.8 119.6 117.3" fill="none" stroke="#4a4a4a" stroke-width="1.2" stroke-linecap="round" stroke-linejoin="round" /><path d="M110.4 227.3L115 231.8 119.6 227.3" fill="none" stroke="#4a4a4a" stroke-width="1.2" stroke-linecap="round" stroke-linejoin="round" /><path d="M112.1 799.7L116.7 804 112.1 808.3" fill="none" stroke="#4a4a4a" stroke-width="1.2" stroke-linecap="round" stroke-linejoin="round" /><path d="M112.1 821.7L116.7 826 112.1 830.3" fill="none" stroke="#4a4a4a" stroke-width="1.2" stroke-linecap="round" stroke-linejoin="round" /><path d="M112.1 843.7L116.7 848 112.1 852.3" fill="none" stroke="#4a4a4a" stroke-width="1.2" stroke-linecap="round" stroke-linejoin="round" /><path d="M112.1 865.7L116.7 870 112.1 874.3" fill="none" stroke="#4a4a4a" stroke-width="1.2" stroke-linecap="round" stroke-linejoin="round" /><path d="M112.1 887.7L116.7 892 112.1 896.3" fill="none" stroke="#4a4a4a" stroke-width="1.2" stroke-linecap="round" stroke-linejoin="round" /><circle cx="376" cy="90.3" r="0.9" fill="#3b3b3b" stroke="none" stroke-width="0"/><circle cx="380" cy="90.3" r="0.9" fill="#3b3b3b" stroke="none" stroke-width="0"/><circle cx="384" cy="90.3" r="0.9" fill="#3b3b3b" stroke="none" stroke-width="0"/><path d="M120.6 246.7L125.2 251 120.6 255.3" fill="none" stroke="#4a4a4a" stroke-width="1.2" stroke-linecap="round" stroke-linejoin="round" /><path d="M120.6 268.7L125.2 273 120.6 277.3" fill="none" stroke="#4a4a4a" stroke-width="1.2" stroke-linecap="round" stroke-linejoin="round" /><path d="M120.6 290.7L125.2 295 120.6 299.3" fill="none" stroke="#4a4a4a" stroke-width="1.2" stroke-linecap="round" stroke-linejoin="round" /><path d="M118.60000000000001 314.8L123.2 319.3 127.8 314.8" fill="none" stroke="#4a4a4a" stroke-width="1.2" stroke-linecap="round" stroke-linejoin="round" /><path d="M128.6 334.7L133.2 339 128.6 343.3" fill="none" stroke="#4a4a4a" stroke-width="1.2" stroke-linecap="round" stroke-linejoin="round" /><path d="M128.6 356.7L133.2 361 128.6 365.3" fill="none" stroke="#4a4a4a" stroke-width="1.2" stroke-linecap="round" stroke-linejoin="round" /><path d="M128.6 510.7L133.2 515 128.6 519.3" fill="none" stroke="#4a4a4a" stroke-width="1.2" stroke-linecap="round" stroke-linejoin="round" /><path d="M128.6 686.7L133.2 691 128.6 695.3" fill="none" stroke="#4a4a4a" stroke-width="1.2" stroke-linecap="round" stroke-linejoin="round" /><path d="M126.6 380.8L131.2 385.3 135.79999999999998 380.8" fill="none" stroke="#4a4a4a" stroke-width="1.2" stroke-linecap="round" stroke-linejoin="round" /><path d="M126.6 534.8L131.2 539.3 135.79999999999998 534.8" fill="none" stroke="#4a4a4a" stroke-width="1.2" stroke-linecap="round" stroke-linejoin="round" /><path d="M134.6 556.8L139.2 561.3 143.79999999999998 556.8" fill="none" stroke="#4a4a4a" stroke-width="1.2" stroke-linecap="round" stroke-linejoin="round" /><path d="M117.6 202.6L126 211M126 202.6L117.6 211" fill="none" stroke="#3b3b3b" stroke-width="1.1" stroke-linecap="round" stroke-linejoin="round" /><path d="M138 155.7H142L145.2 164.8C143.6 164.2 142.6 163.6 141.6 163.4L140 158.2L138.4 163.4C137.4 163.6 136.4 164.2 134.8 164.8Z" fill="#16121f"/><path d="M137.4 165.4C139 166.4 141 166.4 142.6 165.4C142.4 167.2 140.8 167.6 140 169.4C139.2 167.6 137.6 167.2 137.4 165.4Z" fill="#ee2d8e"/><rect x="135.0" y="202.3" width="13.8" height="9.4" rx="1.1" fill="none" stroke="#b9a07c" stroke-width="1"/><path d="M137.5 209.1V204.9L140.0 207.6L142.5 204.9V209.1" fill="none" stroke="#7d5d33" stroke-width="1.3"/><path d="M145.5 204.7V207.8" fill="none" stroke="#7d5d33" stroke-width="1.3"/><path d="M143.8 207.1H147.2L145.5 209.4Z" fill="#7d5d33"/><path d="M141 247.3L142.3 245.3H148.6V247.5Z" fill="#62a8ea"/><rect x="136" y="247.3" width="12.6" height="9.4" rx="0.6" fill="#3a8ad8"/><path d="M146 245.8L149.800 247.500V256.500L146 258.200L139.800 252.600L137.800 254.200L137 253.600V250.400L137.800 249.800L139.800 251.400ZM146 249.200L142.400 252L146 254.800Z" fill="#1f74cf"/><path d="M141 269.3L142.3 267.3H148.6V269.5Z" fill="#a3d469"/><rect x="136" y="269.3" width="12.6" height="9.4" rx="0.6" fill="#8cc152"/><path d="M144.400 268.600L149 271.200V276.600L144.400 279.200L139.800 276.600V271.200Z" fill="#a9dc76" stroke="#8cc152" stroke-width="0.600"/><text x="141.600" y="276.600" font-size="5.500" font-weight="bold" fill="#e9f7d8" font-family="Liberation Sans">JS</text><path d="M141 291.3L142.3 289.3H148.6V291.5Z" fill="#35b354"/><rect x="136" y="291.3" width="12.6" height="9.4" rx="0.6" fill="#1f9a3c"/><circle cx="144.500" cy="294.500" r="1.900" fill="#a4efb0"/><circle cx="140.800" cy="295.800" r="1.500" fill="#86e096"/><circle cx="148.200" cy="295.800" r="1.500" fill="#86e096"/><path d="M141 301.500a3.500 3.500 0 0 1 7 0v0.500h-7Z" fill="#a4efb0"/><path d="M138.500 300.800a2.300 2.300 0 0 1 3-2.200v2.900h-3ZM150.500 300.800a2.300 2.300 0 0 0-3-2.200v2.900h3Z" fill="#86e096"/><path d="M137.5 313.0H142.5L143.8 311.0H149V322.5H137.5Z" fill="#3f8f57"/><path d="M134.5 316.0H148L149.3 322.8H136.2Z" fill="#2c7a44"/><path d="M141.600 317.600L139.200 320.200 141.600 322.800M147 317.600L149.400 320.200 147 322.800M145.100 316.800L143.500 323.600" fill="none" stroke="#27d34f" stroke-width="1.5" stroke-linecap="round" stroke-linejoin="round" /><path d="M149 335.3L150.3 333.3H152V335.5Z" fill="#d9767b"/><rect x="144" y="335.3" width="8" height="9.4" rx="0.6" fill="#c9555b"/><rect x="147" y="336.400" width="11.400" height="10.400" rx="1.600" fill="#4d4d4d"/><rect x="148.600" y="338" width="8.200" height="7.200" rx="0.800" fill="none" stroke="#9a9a9a" stroke-width="0.800"/><circle cx="152.700" cy="341.600" r="1.700" fill="none" stroke="#bdbdbd" stroke-width="0.800"/><path d="M149 357.3L150.3 355.3H156.6V357.5Z" fill="#e6b877"/><rect x="144" y="357.3" width="12.6" height="9.4" rx="0.6" fill="#d9a25f"/><path d="M152.300 357.200L157.800 362.700L152.300 368.200L146.800 362.700Z" fill="#ffa51f"/><path d="M152.300 359.700L155.300 362.700L152.300 365.700L149.300 362.700Z" fill="none" stroke="#ffd37a" stroke-width="0.800"/><path d="M145.5 379.0H150.5L151.8 377.0H157V388.5H145.5Z" fill="#dcae6c"/><path d="M142.5 382.0H156L157.3 388.8H144.2Z" fill="#e6bd82"/><path d="M153.5 555.0H158.5L159.8 553.0H165V564.5H153.5Z" fill="#dcae6c"/><path d="M150.5 558.0H164L165.3 564.8H152.2Z" fill="#e6bd82"/><rect x="151.0" y="400.3" width="13.8" height="9.4" rx="1.1" fill="none" stroke="#b9a07c" stroke-width="1"/><path d="M153.5 407.1V402.9L156.0 405.6L158.5 402.9V407.1" fill="none" stroke="#7d5d33" stroke-width="1.3"/><path d="M161.5 402.7V405.8" fill="none" stroke="#7d5d33" stroke-width="1.3"/><path d="M159.8 405.1H163.2L161.5 407.4Z" fill="#7d5d33"/><rect x="151.0" y="422.3" width="13.8" height="9.4" rx="1.1" fill="none" stroke="#b9a07c" stroke-width="1"/><path d="M153.5 429.1V424.9L156.0 427.6L158.5 424.9V429.1" fill="none" stroke="#7d5d33" stroke-width="1.3"/><path d="M161.5 424.7V427.8" fill="none" stroke="#7d5d33" stroke-width="1.3"/><path d="M159.8 427.1H163.2L161.5 429.4Z" fill="#7d5d33"/><rect x="151.0" y="444.3" width="13.8" height="9.4" rx="1.1" fill="none" stroke="#b9a07c" stroke-width="1"/><path d="M153.5 451.1V446.9L156.0 449.6L158.5 446.9V451.1" fill="none" stroke="#7d5d33" stroke-width="1.3"/><path d="M161.5 446.7V449.8" fill="none" stroke="#7d5d33" stroke-width="1.3"/><path d="M159.8 449.1H163.2L161.5 451.4Z" fill="#7d5d33"/><rect x="151.0" y="466.3" width="13.8" height="9.4" rx="1.1" fill="none" stroke="#b9a07c" stroke-width="1"/><path d="M153.5 473.1V468.9L156.0 471.6L158.5 468.9V473.1" fill="none" stroke="#7d5d33" stroke-width="1.3"/><path d="M161.5 468.7V471.8" fill="none" stroke="#7d5d33" stroke-width="1.3"/><path d="M159.8 471.1H163.2L161.5 473.4Z" fill="#7d5d33"/><path d="M151.3 494.8V491.2L153.1 493.3L154.9 491.2V494.8" fill="none" stroke="#222" stroke-width="1.2"/><path d="M157.5 490.8V493.6" fill="none" stroke="#222" stroke-width="1.2"/><path d="M155.8 493H159.2L157.5 495.2Z" fill="#222"/><path d="M160.5 491L164.3 494.8M164.3 491L160.5 494.8" fill="none" stroke="#f5a623" stroke-width="1.2"/><path d="M149 511.3L150.3 509.3H152V511.5Z" fill="#d98466"/><rect x="144" y="511.3" width="8" height="9.4" rx="0.6" fill="#c9694c"/><path d="M148.8 509.70000000000005H158.20000000000002L157.3 520.1L153.5 521.5L149.70000000000002 520.1Z" fill="#e5501f"/><path d="M150.60000000000002 515.4000000000001C152.10000000000002 512.9000000000001 154.9 512.9000000000001 156.4 515.4000000000001C154.9 517.9000000000001 152.10000000000002 517.9000000000001 150.60000000000002 515.4000000000001Z" fill="#fff"/><circle cx="153.5" cy="515.4000000000001" r="1.300" fill="#e5501f"/><path d="M142.500 533.500H150L151 540.800H144Z" fill="#e0907a"/><path d="M148.8 531.7H158.20000000000002L157.3 542.1L153.5 543.5L149.70000000000002 542.1Z" fill="#e5501f"/><path d="M150.60000000000002 537.4000000000001C152.10000000000002 534.9000000000001 154.9 534.9000000000001 156.4 537.4000000000001C154.9 539.9000000000001 152.10000000000002 539.9000000000001 150.60000000000002 537.4000000000001Z" fill="#fff"/><circle cx="153.5" cy="537.4000000000001" r="1.300" fill="#e5501f"/><path d="M164 573.7H168L171.2 582.8C169.6 582.2 168.6 581.6 167.6 581.4L166 576.2L164.4 581.4C163.4 581.6 162.4 582.2 160.8 582.8Z" fill="#16121f"/><path d="M163.4 583.4C165 584.4 167 584.4 168.6 583.4C168.4 585.2 166.8 585.6 166 587.4C165.2 585.6 163.6 585.2 163.4 583.4Z" fill="#ee2d8e"/><path d="M164 595.7H168L171.2 604.8C169.6 604.2 168.6 603.6 167.6 603.4L166 598.2L164.4 603.4C163.4 603.6 162.4 604.2 160.8 604.8Z" fill="#16121f"/><path d="M163.4 605.4C165 606.4 167 606.4 168.6 605.4C168.4 607.2 166.8 607.6 166 609.4C165.2 607.6 163.6 607.2 163.4 605.4Z" fill="#ee2d8e"/><path d="M156 617.7H160L163.2 626.8C161.6 626.2 160.6 625.6 159.6 625.4L158 620.2L156.4 625.4C155.4 625.6 154.4 626.2 152.8 626.8Z" fill="#16121f"/><path d="M155.4 627.4C157 628.4 159 628.4 160.6 627.4C160.4 629.2 158.8 629.6 158 631.4C157.2 629.6 155.6 629.2 155.4 627.4Z" fill="#ee2d8e"/><path d="M156 639.7H160L163.2 648.8C161.6 648.2 160.6 647.6 159.6 647.4L158 642.2L156.4 647.4C155.4 647.6 154.4 648.2 152.8 648.8Z" fill="#16121f"/><path d="M155.4 649.4C157 650.4 159 650.4 160.6 649.4C160.4 651.2 158.8 651.6 158 653.4C157.2 651.6 155.6 651.2 155.4 649.4Z" fill="#ee2d8e"/><path d="M149 687.3L150.3 685.3H152V687.5Z" fill="#62a8ea"/><rect x="144" y="687.3" width="8" height="9.4" rx="0.6" fill="#3f8fd6"/><rect x="148" y="686.600" width="9" height="10.800" rx="1.500" fill="#5aa7ea" stroke="#2f7cc4" stroke-width="0.800"/><text x="149.600" y="694.700" font-size="7" fill="#e8f3fd" font-family="Liberation Sans">{}</text><path d="M142 750L149 757L142 764L135 757Z" fill="#e0452d"/><path d="M140.500 754V760M140.500 755.500L143.800 758" fill="none" stroke="#fff" stroke-width="1" stroke-linecap="round" stroke-linejoin="round" /><circle cx="140.5" cy="753.8" r="0.9" fill="#fff" stroke="none" stroke-width="0"/><circle cx="140.5" cy="760.2" r="0.9" fill="#fff" stroke="none" stroke-width="0"/><circle cx="144" cy="758.2" r="0.9" fill="#fff" stroke="none" stroke-width="0"/><path d="M139.5 770.2H143.5L146.7 779.3C145.1 778.7 144.1 778.1 143.1 777.9L141.5 772.7L139.9 777.9C138.9 778.1 137.9 778.7 136.3 779.3Z" fill="#16121f"/><path d="M138.9 779.9C140.5 780.9 142.5 780.9 144.1 779.9C143.9 781.7 142.3 782.1 141.5 783.9C140.7 782.1 139.1 781.7 138.9 779.9Z" fill="#ee2d8e"/><path d="M148.28 782.59 L148.36 782.88 L149.47 782.87 L149.47 783.73 L148.36 783.72 L148.28 784.01 L148.18 784.27 L148.02 784.53 L148.82 785.31 L148.21 785.92 L147.43 785.12 L147.17 785.28 L146.91 785.38 L146.62 785.46 L146.63 786.57 L145.77 786.57 L145.78 785.46 L145.49 785.38 L145.23 785.28 L144.97 785.12 L144.19 785.92 L143.58 785.31 L144.38 784.53 L144.22 784.27 L144.12 784.01 L144.04 783.72 L142.93 783.73 L142.93 782.87 L144.04 782.88 L144.12 782.59 L144.22 782.33 L144.38 782.07 L143.58 781.29 L144.19 780.68 L144.97 781.48 L145.23 781.32 L145.49 781.22 L145.78 781.14 L145.77 780.03 L146.63 780.03 L146.62 781.14 L146.91 781.22 L147.17 781.32 L147.43 781.48 L148.21 780.68 L148.82 781.29 L148.02 782.07 L148.18 782.33Z" fill="#dfe8f7" stroke="#8aa0c8" stroke-width="0.9" stroke-linecap="round" stroke-linejoin="round" /><circle cx="146.2" cy="783.3" r="0.9" fill="none" stroke="#e83e8c" stroke-width="0.8"/></svg>
<div style="position:absolute;top:659px;height:22px;line-height:22px;font-size:13px;color:#f2b01e;white-space:pre;left:151.5px;font-weight:bold;letter-spacing:-1.450px;">JS</div>
<div style="position:absolute;top:703px;height:22px;line-height:22px;font-size:11px;color:#2b82d9;white-space:pre;left:143.5px;font-weight:bold;letter-spacing:-0.778px;">TS</div>
<div style="position:absolute;top:725px;height:22px;line-height:22px;font-size:11px;color:#2b82d9;white-space:pre;left:143.5px;font-weight:bold;letter-spacing:-0.778px;">TS</div>
<svg style="position:absolute;left:0;top:0;" width="1521" height="999" viewBox="0 0 1521 999"><path d="M449.800 54.900H438.400M443.600 50L438.200 54.900 443.600 59.800" fill="none" stroke="#3b3b3b" stroke-width="1.2" stroke-linecap="round" stroke-linejoin="round" /><path d="M464 54.900H475.400M470.200 50L475.600 54.900 470.200 59.800" fill="none" stroke="#a6a6a6" stroke-width="1.2" stroke-linecap="round" stroke-linejoin="round" /><circle cx="726.1" cy="53.8" r="4.4" fill="none" stroke="#4a4a4a" stroke-width="1.1"/><path d="M729.400 57.100L732.600 60" fill="none" stroke="#4a4a4a" stroke-width="1.1" stroke-linecap="round" stroke-linejoin="round" /><path d="M1053.600 49.300H1048.600a2.400 2.400 0 0 0-2.400 2.400V56.200a2.400 2.400 0 0 0 2.400 2.400H1049.200V61.600L1053.400 58.600H1057.600a2.400 2.400 0 0 0 2.400-2.400V56" fill="none" stroke="#3b3b3b" stroke-width="1.1" stroke-linecap="round" stroke-linejoin="round" /><path d="M1057.8 46.8Q1058.394 48.906 1060.5 49.5Q1058.394 50.094 1057.8 52.2Q1057.206 50.094 1055.1 49.5Q1057.206 48.906 1057.8 46.8Z" fill="#3b3b3b"/><path d="M1060.5 51.2Q1060.918 52.682 1062.4 53.1Q1060.918 53.518 1060.5 55.0Q1060.082 53.518 1058.6 53.1Q1060.082 52.682 1060.5 51.2Z" fill="#3b3b3b"/><path d="M1073 53.100L1076.700 56.800 1080.400 53.100" fill="none" stroke="#3b3b3b" stroke-width="1.1" stroke-linecap="round" stroke-linejoin="round" /><rect x="1357.6" y="48.4" width="4.8" height="13.2" rx="1.5" fill="none" stroke="#3b3b3b" stroke-width="1.2"/><rect x="1365.6" y="48.4" width="4.9" height="4.9" rx="1.5" fill="none" stroke="#3b3b3b" stroke-width="1.2"/><rect x="1365.6" y="56.7" width="4.9" height="4.9" rx="1.5" fill="none" stroke="#3b3b3b" stroke-width="1.2"/><rect x="1383.6" y="48.4" width="13" height="13.2" rx="2" fill="none" stroke="#3b3b3b" stroke-width="1.2"/><path d="M1385.600 48.400H1388.800V61.600H1385.600a2 2 0 0 1-2-2V50.400a2 2 0 0 1 2-2Z" fill="#3b3b3b"/><rect x="1409.6" y="48.4" width="13" height="13.2" rx="2" fill="none" stroke="#3b3b3b" stroke-width="1.2"/><path d="M1409.600 57H1422.600V59.600a2 2 0 0 1-2 2H1411.600a2 2 0 0 1-2-2Z" fill="#3b3b3b"/><rect x="1435.6" y="48.4" width="13" height="13.2" rx="2" fill="none" stroke="#3b3b3b" stroke-width="1.2"/><path d="M1443.400 48.400V61.600" fill="none" stroke="#3b3b3b" stroke-width="1.2" stroke-linecap="round" stroke-linejoin="round" /></svg>
<svg style="position:absolute;left:0;top:0;" width="1521" height="999" viewBox="0 0 1521 999"><path d="M420 83.2H424L427.2 92.3C425.6 91.7 424.6 91.1 423.6 90.9L422 85.7L420.4 90.9C419.4 91.1 418.4 91.7 416.8 92.3Z" fill="#16121f"/><path d="M419.4 92.9C421 93.9 423 93.9 424.6 92.9C424.4 94.7 422.8 95.1 422 96.9C421.2 95.1 419.6 94.7 419.4 92.9Z" fill="#ee2d8e"/><rect x="872.0" y="85.8" width="13.8" height="9.4" rx="1.1" fill="none" stroke="#b9a07c" stroke-width="1"/><path d="M874.5 92.6V88.4L877.0 91.1L879.5 88.4V92.6" fill="none" stroke="#7d5d33" stroke-width="1.3"/><path d="M882.5 88.2V91.3" fill="none" stroke="#7d5d33" stroke-width="1.3"/><path d="M880.8 90.6H884.2L882.5 92.9Z" fill="#7d5d33"/><path d="M537.600 86.400L545.800 94.600M545.800 86.400L537.600 94.600" fill="none" stroke="#7a7a7a" stroke-width="1.0" stroke-linecap="round" stroke-linejoin="round" /><path d="M982 86.400L990.200 94.600M990.200 86.400L982 94.600" fill="none" stroke="#3b3b3b" stroke-width="1.1" stroke-linecap="round" stroke-linejoin="round" /><circle cx="834" cy="90.3" r="0.9" fill="#3b3b3b" stroke="none" stroke-width="0"/><circle cx="838" cy="90.3" r="0.9" fill="#3b3b3b" stroke="none" stroke-width="0"/><circle cx="842" cy="90.3" r="0.9" fill="#3b3b3b" stroke="none" stroke-width="0"/><path d="M445.0 115.2L449.59999999999997 119.5 445.0 123.8" fill="none" stroke="#5a5a5a" stroke-width="1.1" stroke-linecap="round" stroke-linejoin="round" /><path d="M497.6 115.2L502.2 119.5 497.6 123.8" fill="none" stroke="#5a5a5a" stroke-width="1.1" stroke-linecap="round" stroke-linejoin="round" /><path d="M540.2 115.2L544.8000000000001 119.5 540.2 123.8" fill="none" stroke="#5a5a5a" stroke-width="1.1" stroke-linecap="round" stroke-linejoin="round" /><path d="M659.0 115.2L663.6 119.5 659.0 123.8" fill="none" stroke="#5a5a5a" stroke-width="1.1" stroke-linecap="round" stroke-linejoin="round" /><path d="M902.0 115.2L906.6 119.5 902.0 123.8" fill="none" stroke="#5a5a5a" stroke-width="1.1" stroke-linecap="round" stroke-linejoin="round" /><path d="M964.0 115.2L968.6 119.5 964.0 123.8" fill="none" stroke="#5a5a5a" stroke-width="1.1" stroke-linecap="round" stroke-linejoin="round" /><path d="M1006.2 115.2L1010.8000000000001 119.5 1006.2 123.8" fill="none" stroke="#5a5a5a" stroke-width="1.1" stroke-linecap="round" stroke-linejoin="round" /><path d="M555.9 111.7H559.9L563.1 120.8C561.5 120.2 560.5 119.6 559.5 119.4L557.9 114.2L556.3 119.4C555.3 119.6 554.3 120.2 552.6999999999999 120.8Z" fill="#16121f"/><path d="M555.3 121.4C556.9 122.4 558.9 122.4 560.5 121.4C560.3 123.2 558.6999999999999 123.6 557.9 125.4C557.1 123.6 555.5 123.2 555.3 121.4Z" fill="#ee2d8e"/><rect x="1017.5" y="114.8" width="13.8" height="9.4" rx="1.1" fill="none" stroke="#b9a07c" stroke-width="1"/><path d="M1020 121.6V117.4L1022.5 120.1L1025 117.4V121.6" fill="none" stroke="#7d5d33" stroke-width="1.3"/><path d="M1028 117.2V120.3" fill="none" stroke="#7d5d33" stroke-width="1.3"/><path d="M1026.3 119.6H1029.7L1028 121.9Z" fill="#7d5d33"/><path d="M1286.500 96.200H1280.800a1.600 1.600 0 0 1-1.600-1.600V85.400a1.600 1.600 0 0 1 1.600-1.600H1289.600a1.600 1.600 0 0 1 1.600 1.600V89.600M1284.400 83.800V96.200" fill="none" stroke="#3b3b3b" stroke-width="1.1" stroke-linecap="round" stroke-linejoin="round" /><circle cx="1291" cy="93" r="2.1" fill="none" stroke="#3b3b3b" stroke-width="1.1"/><path d="M1289.400 94.600L1287 97" fill="none" stroke="#3b3b3b" stroke-width="1.1" stroke-linecap="round" stroke-linejoin="round" /><circle cx="1314.8" cy="90.2" r="4.2" fill="none" stroke="#3b3b3b" stroke-width="1.2"/><path d="M1310.400 90.200H1304.600M1307.200 87.400L1304.400 90.200 1307.200 93" fill="none" stroke="#3b3b3b" stroke-width="1.2" stroke-linecap="round" stroke-linejoin="round" /><circle cx="1338.4" cy="90.2" r="3.7" fill="none" stroke="#a8a8a8" stroke-width="1.1"/><path d="M1331.400 90.200H1334.600M1342.200 90.200H1345.400" fill="none" stroke="#a8a8a8" stroke-width="1.1" stroke-linecap="round" stroke-linejoin="round" /><circle cx="1361.8" cy="90.2" r="3.7" fill="none" stroke="#a8a8a8" stroke-width="1.1"/><path d="M1365.600 90.200H1371.600M1369 87.600L1371.800 90.200 1369 92.800" fill="none" stroke="#a8a8a8" stroke-width="1.1" stroke-linecap="round" stroke-linejoin="round" /><circle cx="1389.7" cy="90.2" r="7.3" fill="none" stroke="#3b3b3b" stroke-width="1.1"/><circle cx="1388.7" cy="86" r="1.4" fill="#3b3b3b" stroke="none" stroke-width="0"/><circle cx="1388.7" cy="94.5" r="1.4" fill="#3b3b3b" stroke="none" stroke-width="0"/><circle cx="1392.9" cy="90.5" r="1.4" fill="#3b3b3b" stroke="none" stroke-width="0"/><path d="M1388.700 86V94.500M1388.700 86L1392.900 90.500" fill="none" stroke="#3b3b3b" stroke-width="1.0" stroke-linecap="round" stroke-linejoin="round" /><rect x="1409.7" y="83.8" width="12.8" height="12.8" rx="2" fill="none" stroke="#3b3b3b" stroke-width="1.1"/><path d="M1416.100 83.800V96.600" fill="none" stroke="#3b3b3b" stroke-width="1.1" stroke-linecap="round" stroke-linejoin="round" /><circle cx="1437.8" cy="90.3" r="0.9" fill="#3b3b3b" stroke="none" stroke-width="0"/><circle cx="1442" cy="90.3" r="0.9" fill="#3b3b3b" stroke="none" stroke-width="0"/><circle cx="1446.2" cy="90.3" r="0.9" fill="#3b3b3b" stroke="none" stroke-width="0"/></svg>
<svg style="position:absolute;left:0;top:0;" width="1521" height="999" viewBox="0 0 1521 999"><rect x="1224.2" y="668" width="13" height="12.8" rx="2.5" fill="none" stroke="#3b3b3b" stroke-width="1.1"/><path d="M1226.800 671.600L1229.800 674.400 1226.800 677.200M1231 677.600H1234.800" fill="none" stroke="#3b3b3b" stroke-width="1.1" stroke-linecap="round" stroke-linejoin="round" /><path d="M1285.500 667.700V680.100M1279.300 673.900H1291.700" fill="none" stroke="#3b3b3b" stroke-width="1.1" stroke-linecap="round" stroke-linejoin="round" /><path d="M1298.600 672.500L1302.100 676 1305.600 672.500" fill="none" stroke="#3b3b3b" stroke-width="1.0" stroke-linecap="round" stroke-linejoin="round" /><rect x="1318.6" y="668" width="12.8" height="12.8" rx="2.2" fill="none" stroke="#3b3b3b" stroke-width="1.1"/><path d="M1325 668V680.800" fill="none" stroke="#3b3b3b" stroke-width="1.1" stroke-linecap="round" stroke-linejoin="round" /><path d="M1344.800 670.200H1357.400M1348.600 670V668.600a1.400 1.400 0 0 1 1.400-1.400H1352.200a1.400 1.400 0 0 1 1.400 1.400V670M1346.200 670.400L1347 679.400a1.600 1.600 0 0 0 1.600 1.400H1353.600a1.600 1.600 0 0 0 1.600-1.400L1356 670.400M1349.600 672.800V678.200M1352.600 672.800V678.200" fill="none" stroke="#3b3b3b" stroke-width="1.1" stroke-linecap="round" stroke-linejoin="round" /><circle cx="1372.7" cy="674.5" r="0.9" fill="#3b3b3b" stroke="none" stroke-width="0"/><circle cx="1376.9" cy="674.5" r="0.9" fill="#3b3b3b" stroke="none" stroke-width="0"/><circle cx="1381.1" cy="674.5" r="0.9" fill="#3b3b3b" stroke="none" stroke-width="0"/><path d="M1410.600 672V670.400a1.400 1.400 0 0 1 1.400-1.400H1413.600M1418.400 669H1420a1.400 1.400 0 0 1 1.400 1.400V672M1421.400 676.400V678a1.400 1.400 0 0 1-1.400 1.400H1418.400M1413.600 679.400H1412a1.400 1.400 0 0 1-1.400-1.400V676.400" fill="none" stroke="#3b3b3b" stroke-width="1.1" stroke-linecap="round" stroke-linejoin="round" /><path d="M1437.600 669.900L1446.200 678.500M1446.200 669.900L1437.600 678.500" fill="none" stroke="#3b3b3b" stroke-width="1.1" stroke-linecap="round" stroke-linejoin="round" /></svg>
<svg style="position:absolute;left:0;top:0;" width="1521" height="999" viewBox="0 0 1521 999"><path d="M66.700 910.800L71.200 915 66.700 919.200M77 908.400L73.500 911.900 77 915.400" fill="none" stroke="#4a4a4a" stroke-width="1.1" stroke-linecap="round" stroke-linejoin="round" /><circle cx="100.7" cy="908.7" r="1.7" fill="none" stroke="#4a4a4a" stroke-width="1.1"/><circle cx="100.7" cy="919.3" r="1.7" fill="none" stroke="#4a4a4a" stroke-width="1.1"/><circle cx="107.4" cy="911.2" r="1.7" fill="none" stroke="#4a4a4a" stroke-width="1.1"/><path d="M100.700 910.500V917.500M107.400 913q0 2.600-2.600 2.600H100.700" fill="none" stroke="#4a4a4a" stroke-width="1.1" stroke-linecap="round" stroke-linejoin="round" /><path d="M156.400 920.600H153.600a3.300 3.300 0 0 1-0.500-6.560a4.300 4.300 0 0 1 8.300-1.400a3.600 3.600 0 0 1 2.600 2.200" fill="none" stroke="#4a4a4a" stroke-width="1.1" stroke-linecap="round" stroke-linejoin="round" /><circle cx="159.8" cy="917.6" r="3.5" fill="#4a4a4a" stroke="none" stroke-width="0"/><path d="M159.800 919.600V915.800M158.200 917.200L159.800 915.600 161.400 917.200" fill="none" stroke="#ececec" stroke-width="0.9" stroke-linecap="round" stroke-linejoin="round" /><circle cx="183.8" cy="909.3" r="1.7" fill="none" stroke="#4a4a4a" stroke-width="1.1"/><circle cx="183.8" cy="918.9" r="1.7" fill="none" stroke="#4a4a4a" stroke-width="1.1"/><circle cx="192.4" cy="913.4" r="1.7" fill="none" stroke="#4a4a4a" stroke-width="1.1"/><path d="M183.800 911V917.200M188.300 907.200V921.200M190.700 913.400C188.300 913.400 188.300 918.600 188.300 918.600" fill="none" stroke="#4a4a4a" stroke-width="1.1" stroke-linecap="round" stroke-linejoin="round" /><path d="M225.600 908.200C222.200 908 219.400 910 218 913.200L221 916.200C224 914.800 226 912 225.600 908.200ZM218 913.200L215.800 913.600 217.400 911.400 219.200 911.200M221 916.200L220.600 918.400 222.800 916.800 223 915M217.600 916.600L215.800 918.400M219 917.800L217.800 919" fill="none" stroke="#4a4a4a" stroke-width="1.0" stroke-linecap="round" stroke-linejoin="round" /><circle cx="222.4" cy="911.6" r="1" fill="none" stroke="#4a4a4a" stroke-width="0.9"/><path d="M236.200 912.200L239.800 915.800M241.800 908.200L239.600 910.400M236.600 913L235.400 914.200a2.600 2.600 0 0 0 0 3.600a2.600 2.600 0 0 0 3.600 0L240.200 916.600M238.200 909.200L242.600 913.600M240.400 911.400L239 909.600a2 2 0 0 1 2.800-2.800M235 918L231.200 921" fill="none" stroke="#4a4a4a" stroke-width="1.0" stroke-linecap="round" stroke-linejoin="round" /><circle cx="334.4" cy="914.4" r="6.2" fill="none" stroke="#4a4a4a" stroke-width="1.1"/><path d="M331.800 911.800L337 917M337 911.800L331.800 917" fill="none" stroke="#4a4a4a" stroke-width="1.1" stroke-linecap="round" stroke-linejoin="round" /><path d="M364.600 908.400L371 919.600a0.500 0.500 0 0 1-0.400 0.700H358.600a0.500 0.500 0 0 1-0.400-0.700L364.600 908.400ZM364.600 912.400V916.400" fill="none" stroke="#4a4a4a" stroke-width="1.1" stroke-linecap="round" stroke-linejoin="round" /><circle cx="364.6" cy="918.3" r="0.7" fill="#4a4a4a" stroke="none" stroke-width="0"/><circle cx="698.8" cy="914.3" r="3" fill="none" stroke="#4a4a4a" stroke-width="1.2"/><path d="M698.800 907.800V911.300M698.800 917.300V920.800" fill="none" stroke="#4a4a4a" stroke-width="1.2" stroke-linecap="round" stroke-linejoin="round" /><path d="M1080.200 908.200C1078.200 908.200 1078.600 910 1078.600 911.400C1078.600 912.800 1077.400 913.200 1076.800 913.400C1077.400 913.600 1078.600 914 1078.600 915.400C1078.600 916.800 1078.200 918.600 1080.200 918.600M1084.200 908.200C1086.200 908.200 1085.800 910 1085.800 911.400C1085.800 912.600 1086.400 913.200 1087.200 913.400" fill="none" stroke="#4a4a4a" stroke-width="1.1" stroke-linecap="round" stroke-linejoin="round" /><circle cx="1086.4" cy="918.8" r="1.9" fill="none" stroke="#4a4a4a" stroke-width="1.2"/><circle cx="1178.6" cy="914.2" r="6.2" fill="none" stroke="#4a4a4a" stroke-width="1.1"/><path d="M1174.400 918.600L1182.800 909.800" fill="none" stroke="#4a4a4a" stroke-width="1.1" stroke-linecap="round" stroke-linejoin="round" /><path d="M1333.800 908L1345.600 920.400" fill="none" stroke="#fff" stroke-width="2.2" stroke-linecap="round" stroke-linejoin="round" /><path d="M1344.800 907.600L1340.800 912.200M1338.400 915.400L1334.400 920.200M1331.600 913.200L1337.200 912.600M1342 915.600L1347.600 915" fill="none" stroke="#fff" stroke-width="1.1" stroke-linecap="round" stroke-linejoin="round" /><path d="M1364.800 915L1367.200 917.600 1374.400 910.400M1370.200 917L1371 917.600 1378.400 910.400" fill="none" stroke="#4a4a4a" stroke-width="1.0" stroke-linecap="round" stroke-linejoin="round" /><path d="M1444 918.400H1454.400L1453.200 916.400V912.400a4.100 4.100 0 0 0-8.200 0V916.400ZM1447.800 919.200a1.400 1.400 0 0 0 2.800 0" fill="none" stroke="#4a4a4a" stroke-width="1.1" stroke-linecap="round" stroke-linejoin="round" /></svg>
</div></body></html>
